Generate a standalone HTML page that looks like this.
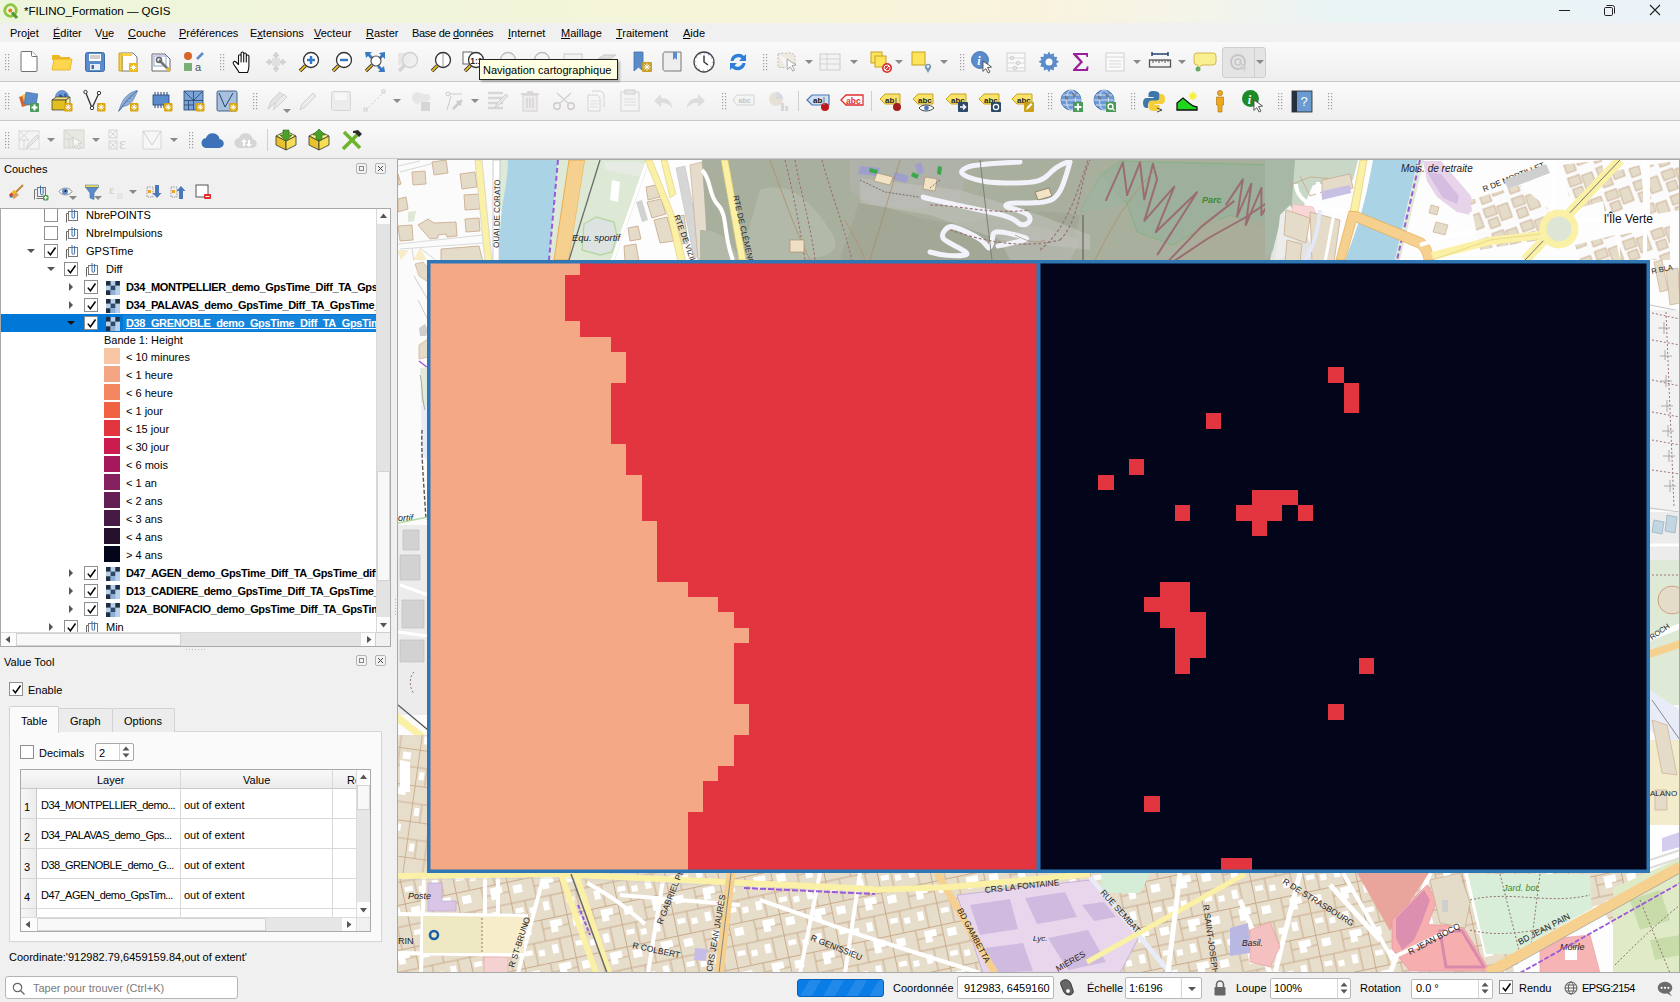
<!DOCTYPE html>
<html><head><meta charset="utf-8"><title>QGIS</title>
<style>
*{margin:0;padding:0;box-sizing:border-box}
html,body{width:1680px;height:1002px;overflow:hidden}
body{position:relative;background:#f0f0f0;font-family:"Liberation Sans",sans-serif;font-size:11px;color:#000}
.a{position:absolute}
.t{position:absolute;white-space:nowrap;line-height:14px}
svg.i{position:absolute;overflow:visible}
.tb{position:absolute;left:0;width:1680px;background:linear-gradient(#fafafa,#efefef);border-bottom:1px solid #c9c9c9}
.grip{position:absolute;width:4px;background-image:radial-gradient(circle,#b9b9b9 0.8px,transparent 1px);background-size:4px 3px}
.dd{position:absolute;width:0;height:0;border-left:4px solid transparent;border-right:4px solid transparent;border-top:4px solid #8a8a8a}
.cb{position:absolute;width:14px;height:14px;border:1px solid #8f8f8f;background:#fff}
.ck{position:absolute;left:2px;top:0px;font-size:12px;line-height:13px;font-weight:bold}
u{text-decoration:underline;text-underline-offset:1px;text-decoration-skip-ink:none}
</style></head><body>
<div class="a" style="left:397px;top:159px;width:1283px;height:814px;background:#a8a8a8"></div>
<svg class="i" style="left:398px;top:160px;overflow:hidden" width="1281" height="812" viewBox="398 160 1281 812">
<defs>
<pattern id="town" width="52" height="44" patternUnits="userSpaceOnUse" patternTransform="rotate(-12)">
 <rect width="52" height="44" fill="#e7ddcb"/>
 <path d="M0 .5h52M.5 0v44M26 0v22M0 22h52M14 22v22M40 22v22M26 10h26" stroke="#c6a686" stroke-width=".9" fill="none"/>
 <rect x="5" y="5" width="9" height="8" fill="#fff"/><rect x="31" y="27" width="6" height="9" fill="#fff"/><rect x="17" y="30" width="6" height="6" fill="#fff"/>
 <path d="M34 3h12v7h-5v5h-7z" fill="#fff"/><rect x="3" y="28" width="8" height="5" fill="#fff"/>
</pattern>
<pattern id="town2" width="40" height="36" patternUnits="userSpaceOnUse" patternTransform="rotate(8)">
 <rect width="40" height="36" fill="#e7ddcb"/>
 <path d="M0 .5h40M.5 0v36M20 0v36M0 18h40M10 18v18" stroke="#c6a686" stroke-width=".8" fill="none"/>
 <rect x="24" y="4" width="8" height="7" fill="#fff"/><rect x="3" y="22" width="5" height="8" fill="#fff"/>
</pattern>
<pattern id="houses" width="44" height="40" patternUnits="userSpaceOnUse" patternTransform="rotate(-6)">
 <rect width="44" height="40" fill="#fff"/>
 <rect x="6" y="6" width="16" height="14" fill="#e5dbc9" stroke="#c6a686" stroke-width=".9"/>
 <rect x="28" y="22" width="11" height="12" fill="#e5dbc9" stroke="#c6a686" stroke-width=".9"/>
</pattern>
<pattern id="dense" width="30" height="26" patternUnits="userSpaceOnUse" patternTransform="rotate(-20)">
 <rect width="30" height="26" fill="#fbfbfb"/>
 <rect x="2" y="2" width="12" height="9" fill="#e5dbc9" stroke="#c6a686" stroke-width=".8"/>
 <rect x="16" y="4" width="11" height="15" fill="#e5dbc9" stroke="#c6a686" stroke-width=".8"/>
 <rect x="3" y="14" width="10" height="9" fill="#e5dbc9" stroke="#c6a686" stroke-width=".8"/>
</pattern>
</defs>
<rect x="398" y="160" width="1282" height="813" fill="#fbfbfb"/>
<path d="M398 166l22-5M400 172l42-11" stroke="#c8c8c8" stroke-width=".7" fill="none"/>
<path d="M432 162l14-2 2 13-14 2zM412 172l13-1 1 13-13 1zM460 174l15-2 2 15-15 2zM398 174l3 10-3 1zM464 195l15-1 1 15-15 1zM398 199l8-2 2 12-10 3zM465 219l14-1 1 13-14 1zM398 226l14-1 1 15-13 1z" fill="#e5dbc9" stroke="#c6a686" stroke-width=".8"/>
<path d="M418 225l10-6 6 4 22-1 1 14-10 1-1-3-8 1v3l-8 1z" fill="#e5dbc9" stroke="#c6a686" stroke-width=".8"/>
<path d="M408 212l8-1-2 10-6 1z" fill="#dfe8d7"/>
<path d="M398 244l85-9M400 249l83-6" stroke="#d0d0d0" stroke-width=".8" fill="none"/>
<path d="M441 249l38-3 4 16h-42z" fill="#e5dbc9" stroke="#c6a686" stroke-width=".8"/>
<path d="M412 262l8-14 8 14zM397 250l12 0-8 10z" fill="#f8edc8"/><path d="M420 248l18 14M414 262l-2-14" stroke="#c8c8c8" stroke-width=".7" fill="none"/>
<path d="M500 160h9l-6 52-3-2z" fill="#dfe9d7"/>
<path d="M475 160h7l10 102h-7z" fill="#faf0a6" stroke="#c9c9c9" stroke-width=".6"/>
<path d="M493 160h7l-1 102h-6z" fill="#fff" stroke="#b0b0b0" stroke-width=".6"/>
<text x="0" y="0" font-size="8" font-family="Liberation Sans" fill="#222" transform="translate(499 248) rotate(-89)">QUAI DE CORATO</text>
<path d="M508 160h50l-9 102h-50c0-20 2-50 4-60s5-30 5-42z" fill="#aad3e6"/>
<path d="M558 160h12l-16 100h-5z" fill="#dfe9d7"/>
<path d="M558 160l-9 100" stroke="#9b5ad8" stroke-width="2" stroke-dasharray="5 3"/>
<path d="M569 160h16l-16 100h-15z" fill="#f6d08f" stroke="#e4a23a" stroke-width=".8"/>
<path d="M585 160h61l-34 100h-43z" fill="#dde8d5"/>
<path d="M600 160l-31 100" stroke="#6a6a6a" stroke-width="1.3"/>
<path d="M604 162h36l10 6-4 10-40-8z" fill="#e6ece3"/><path d="M612 180l8 2-2 20-8-2z" fill="#fff"/>
<path d="M584 224l12-7 18 5 3 14-5 16-12 3-18-5z" fill="#dde3e1" stroke="#b4d8a4" stroke-width="1.3"/>
<path d="M648 160l-36 102" stroke="#fff" stroke-width="3.5"/><path d="M650 160l-36 102" stroke="#c8c8c8" stroke-width=".5"/>
<path d="M614 262l36-102h52l5 102z" fill="#fdfdfd"/>
<path d="M646 187l10-2 4 12-12 3zM647 202l14-3 5 15-14 4zM654 220l13-3 7 24-14 2zM672 218l12-3 4 28-12 2zM628 228l10-2 3 13-11 2zM624 246l12-2 3 18h-14zM690 205l8-2 4 20-8 2z" fill="#e5dbc9" stroke="#c6a686" stroke-width=".8"/>
<path d="M636 202l6-2 6 20-6 2z" fill="#d2d2d2"/>
<text x="572" y="241" font-size="9.5" font-style="italic" font-family="Liberation Sans" fill="#222">Equ. sportif</text>
<path d="M645 160h7l22 54 12 48h-8l-10-46zM661 160h6l9 34-6 4z" fill="#faf0a6" stroke="#d8c46a" stroke-width=".5"/>
<text x="0" y="0" font-size="8" font-family="Liberation Sans" fill="#222" transform="translate(674 216) rotate(70)">RTE DE VIZILLE</text>
<path d="M676 168l9-2 18 90-9 2z" fill="#d6d6d6" stroke="#bdbdbd" stroke-width=".5"/>
<path d="M690 165l12-3 8 98h-12z" fill="#e6dccb" stroke="#c6a686" stroke-width=".6"/>
<path d="M702 160h590v100H708z" fill="#a9af9d"/>
<path d="M760 190c30-10 50 10 70 40s-20 30-60 30h-30zM700 230c20 0 30 10 40 30h-40z" fill="#b3b9a8"/>
<path d="M860 200c40 10 80 30 120 20s60-10 100-5l-10 45H840z" fill="#a2a895"/>
<path d="M702 170c10 10 6 25 16 35s5 30 15 55" stroke="#fff" stroke-width="4" fill="none"/>
<path d="M721 160h7l18 100h-7z" fill="#faf0a6" stroke="#d8c46a" stroke-width=".6"/>
<text x="0" y="0" font-size="8" font-family="Liberation Sans" fill="#222" transform="translate(733 196) rotate(77)">RTE DE CLÉMENCIÈRES</text>
<path d="M795 160c5 30 15 60 20 100M822 160c8 30 20 60 30 100M785 160c10 40 15 70 20 100" stroke="#9a7274" stroke-width="1.1" stroke-dasharray="2.5 2" fill="none"/>
<path d="M770 160c15 40 25 70 40 100M845 220c5 10 15 25 20 40" stroke="#b08d6c" stroke-width=".8" fill="none"/>
<rect x="790" y="240" width="14" height="12" fill="#eee0c6" stroke="#b08d6c" stroke-width=".7"/>
<path d="M850 160h120l-10 40-40 10-50-5-20-15z" fill="#b5b5b0" opacity=".55"/>
<path d="M860 178l100 12 80 25 50 20v15l-90-10-70-25-70-12z" fill="#c2c2bd" opacity=".55"/><path d="M1000 240l30-15 20 5 30 10-10 20h-60z" fill="#c0c0bb" opacity=".5"/>
<path d="M860 166l20 2-2 8-20-2zM895 172l14 4-3 7-14-4zM915 165l6-3 3 10-6 3z" fill="#9f9fcd"/>
<path d="M870 168l8 2-1 4-8-2zM913 172l6 3-2 4-6-3zM938 166l4 1-1 8-4-1z" fill="#3aa84a"/>
<path d="M877 173l16 4-3 8-16-4zM925 177l12 2-2 12-12-2z" fill="#f2e3c5" stroke="#a58a6a" stroke-width=".6"/>
<path d="M860 180l25 12 40 6M930 188l10-8" stroke="#7a6a6a" stroke-width="1" stroke-dasharray="2 1.5" fill="none"/>
<path d="M1020 162c-20 1-45 2-52 5s-10 6 0 10 20 6 45 6 30-3 35-8 10-10 20-13" stroke="#f2f3fa" stroke-width="5" fill="none" stroke-linecap="round" stroke-linejoin="round"/>
<path d="M923 197c10 3 25 6 48 11s40 8 46 14 14 1 13-4-12-8-20-10-4-5 6-5 30 1 37-4 10-12 17-37" stroke="#f2f3fa" stroke-width="5" fill="none" stroke-linecap="round" stroke-linejoin="round"/>
<path d="M930 252c10 3 25 5 35 3s-20-12-22-17 4-13 11-11 20 8 27 13 7 12 10 5 0-12 5-13 25 4 30 6-20 6-28 8" stroke="#f2f3fa" stroke-width="5" fill="none" stroke-linecap="round" stroke-linejoin="round"/>
<path d="M980 160l12 100" stroke="#777" stroke-width=".9"/>
<path d="M930 205c30 0 60 10 100 5M950 230c30 10 70 20 110 10M1060 240c20-20 20-60 30-80M1040 250c25-20 35-50 48-90" stroke="#9a7274" stroke-width="1.2" stroke-dasharray="3 2" fill="none"/>
<path d="M1035 192l14-4 3 8-14 4z" fill="#f2e3c5" stroke="#7a6a5a" stroke-width=".7"/>
<path d="M900 160l-30 100M1015 235c10 5 20 10 30 5" stroke="#a68a6a" stroke-width=".7" fill="none"/>
<path d="M1101 175l19-14 197 5-46 63-41-14-22 10-35 20-36-13-11-31-46 11z" fill="#9cb09c" stroke="#7fb27a" stroke-width=".8"/>
<path d="M1080 212l21-37 24 30z" fill="#a0b3a0"/>
<path d="M1083 215v45" stroke="#555" stroke-width="1"/>
<path d="M1180 260l20-40h80l10 40z" fill="#a9ac98" opacity=".7"/>
<polyline points="1105.7,200.9 1122.9,162.3 1127.1,195.1 1140.0,162.3 1144.3,199.4 1152.9,163.7 1157.1,179.4 1144.3,220.9 1174.3,186.6 1155.7,232.3 1197.1,192.3 1157.1,255.1" stroke="#9a6d72" stroke-width="2" fill="none" stroke-linejoin="round"/>
<polyline points="1225.7,205.1 1242.9,179.4 1237.1,216.6 1251.4,183.7 1245.7,225.1 1261.4,188.0 1261.4,215.1 1280.0,185.1 1277.1,220.9 1290.0,189.4" stroke="#9a6d72" stroke-width="2" fill="none" stroke-linejoin="round"/>
<polyline points="1168.6,260.9 1201.4,226.6 1234.3,200.9" stroke="#9a6d72" stroke-width="2" fill="none" stroke-linejoin="round"/>
<polyline points="1174.3,260.9 1208.6,238.0 1244.3,218.0 1291.4,186.6" stroke="#9a6d72" stroke-width="2" fill="none" stroke-linejoin="round"/>
<text x="1202" y="203" font-size="9" font-style="italic" font-weight="bold" font-family="Liberation Sans" fill="#3f8a2f">Parc</text>
<path d="M1095 260c10-20 30-60 60-90" stroke="#b08d6c" stroke-width=".8" fill="none"/>
<path d="M1290 160h390v100h-390z" fill="#fdfdfd"/>
<path d="M1285 160h73l-5 20-40 5-20 45-8 30h-15z" fill="#c9d8c6"/>
<path d="M1265 160h30l-5 70-25 30z" fill="#a7b9a6"/>
<path d="M1270 262l10-40 15-10 25 50z" fill="#e4e5e2"/><path d="M1280 215l10-10 10 15-5 30-20 12z" fill="#ececea"/>
<path d="M1290 185l20-8 25 2M1300 176l10 20 15-5" stroke="#c6a686" stroke-width=".8" fill="none"/>
<path d="M1296 184c0 10 8 20 24 24l32 4M1318 182v26" stroke="#fff" stroke-width="4" fill="none"/>
<path d="M1322 180l28-6 3 14-31 8z" fill="#e5dbc9" stroke="#c6a686" stroke-width=".7"/><path d="M1322 191l28-6 1 8-29 7z" fill="#c8c0e2"/>
<path d="M1293 204l20 3 5 12-12 4-14-8z" fill="#f8d6d6" stroke="#f0b0b0" stroke-width=".6"/><path d="M1302 220l5-2-3 10-4 1z" fill="#b7b0e0"/>
<path d="M1286 210l24 8-4 25-22-8zM1310 212l30 8-6 42h-22zM1287 240l15 4-2 18h-15z" fill="#e5dbc9" stroke="#c6a686" stroke-width=".7"/>
<path d="M1320 210c-2 20-5 35-16 52" stroke="#e4e8f8" stroke-width="3.5" fill="none"/>
<path d="M1335 208l-10 54" stroke="#fff" stroke-width="3"/>
<path d="M1373 160h45l-23 100h-50c12-30 20-55 28-100z" fill="#aad3e6"/>
<path d="M1418 160h6l-24 100h-5z" fill="#dfe9d7"/><path d="M1420 160l-23 100" stroke="#9b5ad8" stroke-width="2" stroke-dasharray="5 3"/>
<path d="M1360 160h7l-9 52h-8z" fill="#faf0a6" stroke="#d8c46a" stroke-width=".6"/>
<path d="M1349 211l9 1 64 26c8 4 10 12 12 22h-10c-1-6-4-12-8-13l-60-25-11 38h-9z" fill="#f6d08f" stroke="#e4a23a" stroke-width=".6"/>
<path d="M1423 161h18l30 35 4 20-18-4-20-15-10-16z" fill="#e7d3ea"/><path d="M1427 172l14 2 18 22-2 8-14-6z" fill="#d4bde1"/>
<text x="1401" y="172" font-size="10" font-style="italic" font-family="Liberation Sans" fill="#222">Mois. de retraite</text>
<path d="M1420 245l30-10 40-5M1428 215l12-15M1470 215l90-60" stroke="#fff" stroke-width="4" fill="none"/>
<path d="M1431 205l8 2-2 8-8-2zM1436 222l12 3-3 10-12-3z" fill="#e5dbc9" stroke="#c6a686" stroke-width=".6"/>
<text x="0" y="0" font-size="8" font-family="Liberation Sans" fill="#222" transform="translate(1484 192) rotate(-22)">R DE MORTILLET</text>
<path d="M1504 180l42-16 4 9-42 16z" fill="#cfcfcf"/>
<path d="M1470 200l50-15 30 25-10 30-60 10zM1562 165l40-5 5 40-35 10zM1600 175l40-10 5 40-40 10zM1575 245l40-10 5 25h-40zM1620 235l50-10v35h-50zM1650 165l30-5v50l-30 5z" fill="url(#dense)"/>
<path d="M1432 256l58-15 50-6" stroke="#faf0a6" stroke-width="8" fill="none"/><path d="M1432 260l58-20 50-6" stroke="#d8c46a" stroke-width=".5" fill="none"/>
<path d="M1525 260l95-100" stroke="#faf0a6" stroke-width="10"/><path d="M1525 260l95-100" stroke="#666" stroke-width=".9"/>
<path d="M1553 160v52M1645 160v100M1577 222l70-8" stroke="#fff" stroke-width="4"/>
<circle cx="1559" cy="229" r="16" fill="#dde6d5" stroke="#faf0a6" stroke-width="7"/>
<text x="1604" y="223" font-size="12" font-family="Liberation Sans" fill="#111">l'Île Verte</text>
<rect x="398" y="260" width="30" height="270" fill="#fbfbfb"/>
<path d="M415 264l8-2 5 6v14l-9-6z" fill="#e5dbc9" stroke="#c6a686" stroke-width=".6"/>
<path d="M414 276l14 24M418 300l10 20" stroke="#c8c8c8" stroke-width=".9"/>
<path d="M419 328l6-4 3 6-2 6h-6z" fill="#cfcfcf"/><path d="M419 345l9-6v18l-9 2z" fill="#e5dbc9" stroke="#c6a686" stroke-width=".6"/>
<path d="M419 361l9 7" stroke="#9b5ad8" stroke-width="1.5"/>
<path d="M420 368l8-1v45l-7-10z" fill="#e3e8dc"/><path d="M421 405l7 2v55l-6-8z" fill="#e8ebfa"/>
<path d="M420 375c3 10 1 20 5 35" stroke="#999" stroke-width=".8" fill="none"/>
<path d="M422 430c-1 25 2 55 4 90" stroke="#555" stroke-width="1.4" stroke-dasharray="4 2" fill="none"/>
<text x="398" y="521" font-size="9" font-style="italic" font-family="Liberation Sans" fill="#222">ortif</text>
<path d="M398 523l30-6" stroke="#b4d8a4" stroke-width="1.3"/>
<rect x="398" y="525" width="30" height="190" fill="#ececec"/>
<path d="M403 530h16v20h-16zM400 555h20v25h-20zM402 600h22v28h-22zM400 640h24v22h-24z" fill="#d2d2d2" stroke="#bdbdbd" stroke-width=".6"/>
<path d="M400 585l28 10M398 632l30 4" stroke="#fff" stroke-width="3"/>
<path d="M414 672c-5 5-5 15 0 22" stroke="#9a7274" stroke-width="1" stroke-dasharray="2 2" fill="none"/>
<path d="M398 705l30 25" stroke="#555" stroke-width="1.3"/><path d="M398 713l30 24v8l-30-22z" fill="#faf0a6"/>
<rect x="398" y="735" width="30" height="140" fill="url(#town2)"/>
<path d="M400 760l10 2v30h-10z" fill="#fff"/>
<rect x="1650" y="260" width="30" height="50" fill="#fdfdfd"/>
<path d="M1654 262l8-2 6 30-8 2zM1666 270l12-2 2 35-10 2z" fill="#e5dbc9" stroke="#c6a686" stroke-width=".6"/>
<text x="0" y="0" font-size="7.5" font-family="Liberation Sans" fill="#222" transform="translate(1652 274) rotate(-12)">R BLA</text>
<path d="M1650 305l30 6" stroke="#c4c4c4" stroke-width="1"/>
<rect x="1650" y="310" width="30" height="200" fill="#f2f2f2"/>
<path d="M1652 313l28 6M1652 340l28 5M1652 380l28 6M1652 412l28 5M1652 440l28 5M1652 470l28 4M1666 312l8 195" stroke="#a07474" stroke-width="1" stroke-dasharray="2 2" fill="none"/>
<path d="M1664 322v12M1658 328h12M1665 350v10M1660 356h12M1666 375v12M1660 381h12M1667 400v12M1661 406h12M1668 425v12M1662 431h12M1669 450v12M1663 456h12M1670 480v12M1664 486h12" stroke="#9a9a9a" stroke-width=".8"/>
<path d="M1650 508l30 4" stroke="#c4c4c4"/>
<rect x="1650" y="512" width="30" height="48" fill="#ececec"/><path d="M1654 520l10 2-2 12-10-2zM1667 515l10 2-2 16-10-2z" fill="#c2d6e2" stroke="#8aa4b4" stroke-width=".6"/>
<path d="M1650 545h30" stroke="#fff" stroke-width="3"/>
<rect x="1650" y="560" width="30" height="145" fill="#dfead6"/>
<circle cx="1672" cy="600" r="14" fill="#e5dbc9" stroke="#c6a686"/><path d="M1652 575h26" stroke="#a07474" stroke-dasharray="2 2"/>
<path d="M1650 635l30-12v6l-30 12z" fill="#fff"/><path d="M1650 650l30-10v8l-30 10z" fill="#f6d08f"/>
<text x="0" y="0" font-size="7.5" font-family="Liberation Sans" fill="#222" transform="translate(1652 640) rotate(-35)">ROCH</text>
<path d="M1650 690l30 20v50l-30-30z" fill="#e8ebf8"/><path d="M1652 700l28 40" stroke="#8a8a8a" stroke-width="1"/>
<path d="M1650 740h30v85h-30z" fill="#f3eccc"/><path d="M1652 720l15 5 10 50-15-2zM1655 790h12v20h-12z" fill="#e5dbc9" stroke="#c6a686" stroke-width=".6"/>
<text x="1650" y="796" font-size="8" font-family="Liberation Sans" fill="#222">ALANO</text>
<path d="M1650 825h30v48h-30z" fill="#fff"/><path d="M1662 838l18-6v15l-18 5z" fill="#d4cdee"/><path d="M1650 860l30-10M1650 868l30-10" stroke="#ddd" stroke-width="2"/>
<rect x="398" y="873" width="1282" height="100" fill="url(#town)"/>
<path d="M424 878l-3 95M485 878v37M498 878v37M543 878l-25 95M398 914l130 2M398 953l125 2M587 883c20 10 40 25 58 41M663 880l-15 93M760 900l100 35 120 38M820 873l-20 100M860 873l-15 100M620 895l120 10" stroke-width="4" stroke="#fff" fill="none"/>
<path d="M398 876l160-2 165 8 150 7" stroke="#faf0a6" stroke-width="6" fill="none"/><path d="M398 880l160-2 165 8 150 7" stroke="#cfcfcf" stroke-width=".6" fill="none"/>
<path d="M561 874l35 99M576 874l33 99" stroke="#faf0a6" stroke-width="6"/><path d="M571 874l36 99" stroke="#6a6a6a" stroke-width="1.5"/><path d="M578 905l12 30" stroke="#9b5ad8" stroke-width="2" stroke-dasharray="4 2"/>
<path d="M731 873l-12 100" stroke="#f6d08f" stroke-width="9"/><path d="M731 873l-12 100" stroke="#8a8a8a" stroke-width="1"/>
<path d="M744 888l131 6" stroke="#9b5ad8" stroke-width="2" stroke-dasharray="6 2"/>
<path d="M428 883h14v18h14v10h-28z" fill="#d9c6e6" stroke="#b9a2cf" stroke-width=".6"/>
<path d="M423 916l101 1v36H423z" fill="#efe9c3"/><path d="M482 917h42v36h-42z" fill="#f7edcb"/><path d="M482 918v35" stroke="#8f7474" stroke-dasharray="2 2"/>
<circle cx="434" cy="935" r="4" fill="none" stroke="#1c5fa8" stroke-width="2.6"/>
<path d="M484 957h24v16h-24z" fill="#f5d2d2" stroke="#e6a0a0" stroke-width=".6"/>
<path d="M695 948l12 1-1 12-12-1z" fill="#c5bde6"/>
<text x="408" y="899" font-size="9" font-style="italic" font-family="Liberation Sans" fill="#222">Poste</text>
<text x="398" y="944" font-size="9" font-family="Liberation Sans" fill="#222">RIN</text>
<text x="0" y="0" font-size="8.5" font-family="Liberation Sans" fill="#222" transform="translate(514 968) rotate(-72)">R ST-BRUNO</text>
<text x="0" y="0" font-size="8.5" font-family="Liberation Sans" fill="#222" transform="translate(662 925) rotate(-68)">R GABRIEL PÉRI</text>
<text x="0" y="0" font-size="8.5" font-family="Liberation Sans" fill="#222" transform="translate(632 948) rotate(12)">R COLBERT</text>
<text x="0" y="0" font-size="8.5" font-family="Liberation Sans" fill="#222" transform="translate(712 972) rotate(-80)">CRS JEAN JAURÈS</text>
<text x="0" y="0" font-size="8.5" font-family="Liberation Sans" fill="#222" transform="translate(810 940) rotate(22)">R GENISSIEU</text>
<path d="M872 893l80 2 138-15 50 55-20 38H982z" fill="url(#town)" opacity="0"/>
<path d="M957 895l133-15 50 55-20 38H983z" fill="#e7d6ec" stroke="#c9b1da" stroke-width="1"/>
<path d="M970 905l40-6 8 30-38 6zM1025 898l40-6 12 25-40 7zM985 948l38-5 10 28-40 2zM1048 938l40-8 18 32-38 8zM1082 905l22-3 12 15-22 4z" fill="#d0bbe0"/>
<text x="1033" y="941" font-size="8" font-style="italic" font-family="Liberation Sans" fill="#222">Lyc.</text>
<path d="M937 873l58 100" stroke="#f6d08f" stroke-width="7"/>
<path d="M870 890l80-3 140-13" stroke="#faf0a6" stroke-width="6" fill="none"/>
<text x="0" y="0" font-size="8.5" font-family="Liberation Sans" fill="#222" transform="translate(985 893) rotate(-6)">CRS LA FONTAINE</text>
<text x="0" y="0" font-size="8.5" font-family="Liberation Sans" fill="#222" transform="translate(957 910) rotate(62)">BD GAMBETTA</text>
<path d="M1090 877l80 96" stroke="#e8ecf8" stroke-width="5"/>
<path d="M1102 873h48l-10 20h-38z" fill="#d5ecd7"/>
<path d="M1087 962l158-88" stroke="#faf0a6" stroke-width="5"/>
<text x="0" y="0" font-size="8.5" font-family="Liberation Sans" fill="#222" transform="translate(1100 893) rotate(48)">RUE SEMBAT</text>
<text x="0" y="0" font-size="8.5" font-family="Liberation Sans" fill="#222" transform="translate(1058 972) rotate(-30)">MIÈRES</text>
<path d="M1180 873l-12 100M1240 900l30 73M1300 873l-25 100M1330 885l50 55M1430 873l-40 100" stroke="#fff" stroke-width="5"/>
<text x="0" y="0" font-size="8.5" font-family="Liberation Sans" fill="#222" transform="translate(1203 905) rotate(82)">R SAINT-JOSEPH</text>
<path d="M1230 928l18-5 2 30-20 3z" fill="#b9b8e2"/><path d="M1250 930l20-8 10 25-10 20-20-5z" fill="#f5c0c0" stroke="#e39a9a" stroke-width=".6"/>
<text x="1242" y="946" font-size="8.5" font-style="italic" font-family="Liberation Sans" fill="#222">Basil.</text>
<path d="M1343 873l51 89" stroke="#fff" stroke-width="4"/>
<path d="M1357 873h72l-12 18-27 40z" fill="#e9a59b"/>
<path d="M1392 920l35-35 10 15-9 25h34l28 46h-80l-18-22z" fill="#f7aeae" stroke="#e48fa0" stroke-width=".6"/>
<path d="M1396 918l28-28 6 10-8 22-8 18-12 10-6-12z" fill="#dc8fae"/><path d="M1440 931h22l22 36h-38z" fill="none" stroke="#d98aab" stroke-width="3"/>
<path d="M1430 880l30-7 10 30-5 25-25-5z" fill="#e5dbc9" stroke="#c6a686" stroke-width=".6"/><rect x="1442" y="900" width="6" height="12" fill="#cfcfcf"/>
<path d="M1394 957l66-32M1466 873l20 80" stroke="#fff" stroke-width="4"/>
<text x="0" y="0" font-size="8.5" font-family="Liberation Sans" fill="#222" transform="translate(1282 883) rotate(32)">R DE STRASBOURG</text>
<text x="0" y="0" font-size="8.5" font-family="Liberation Sans" fill="#222" transform="translate(1410 955) rotate(-28)">R JEAN BOCQ</text>
<path d="M1468 874h122l2 40-20 30-20 10h-66z" fill="#d9eed9"/>
<path d="M1470 900c40-10 80 5 120-5M1500 874l20 80M1540 874l-10 80M1470 930c40 10 70-5 100 0" stroke="#8f7070" stroke-width="1" stroke-dasharray="2 2" fill="none"/>
<text x="1503" y="891" font-size="9" font-style="italic" font-family="Liberation Sans" fill="#3f8a2f">Jard. bot.</text>
<path d="M1518 950l80-45 15 20v48h-95z" fill="#fdfdfd"/>
<path d="M1540 940l50-5 10 38h-60z" fill="#f6b4b4" stroke="#e49a9a" stroke-width=".6"/><rect x="1565" y="948" width="12" height="12" fill="#fff"/>
<text x="1560" y="950" font-size="9" font-style="italic" font-family="Liberation Sans" fill="#222">Moirle</text>
<path d="M1613 888l67-30v115h-67z" fill="#dfeac6"/><path d="M1630 900l30-10 10 30-30 10zM1650 940l30-5v20l-25 5z" fill="#c8dcaa"/><path d="M1615 965c20-20 40-40 65-60M1640 900l30 73" stroke="#8f7070" stroke-dasharray="2 2" fill="none"/>
<path d="M1488 973l192-106" stroke="#f6d08f" stroke-width="11"/><path d="M1500 973l180-100" stroke="#9a9a9a" stroke-width=".7"/>
<path d="M1520 973l160-90" stroke="#9b5ad8" stroke-width="1.8" stroke-dasharray="5 2"/>
<text x="0" y="0" font-size="8.5" font-family="Liberation Sans" fill="#222" transform="translate(1520 945) rotate(-28)">BD JEAN PAIN</text>
<rect x="427" y="260" width="613" height="613" fill="#e3353f"/>
<path d="M427 260 L580 260 L580 275 L565 275 L565 291 L565 291 L565 306 L565 306 L565 321 L580 321 L580 337 L611 337 L611 352 L626 352 L626 367 L626 367 L626 383 L611 383 L611 398 L611 398 L611 413 L611 413 L611 429 L611 429 L611 444 L626 444 L626 459 L626 459 L626 475 L642 475 L642 490 L642 490 L642 505 L642 505 L642 521 L657 521 L657 536 L657 536 L657 551 L657 551 L657 566 L657 566 L657 582 L688 582 L688 597 L718 597 L718 612 L734 612 L734 628 L749 628 L749 643 L734 643 L734 658 L734 658 L734 674 L734 674 L734 689 L734 689 L734 704 L749 704 L749 720 L749 720 L749 735 L734 735 L734 750 L734 750 L734 766 L718 766 L718 781 L703 781 L703 796 L703 796 L703 812 L688 812 L688 827 L688 827 L688 842 L688 842 L688 858 L688 858 L688 873 L427 873 Z" fill="#f4a886" shape-rendering="crispEdges"/>
<rect x="1037" y="260" width="613" height="613" fill="#03051a"/>
<path d="M1328 367H1344V383H1328ZM1344 383H1359V398H1344ZM1344 398H1359V413H1344ZM1206 413H1221V429H1206ZM1129 459H1144V475H1129ZM1098 475H1114V490H1098ZM1175 505H1190V521H1175ZM1252 490H1267V505H1252ZM1267 490H1282V505H1267ZM1282 490H1298V505H1282ZM1236 505H1252V521H1236ZM1252 505H1267V521H1252ZM1267 505H1282V521H1267ZM1298 505H1313V521H1298ZM1252 521H1267V536H1252ZM1160 582H1175V597H1160ZM1175 582H1190V597H1175ZM1144 597H1160V612H1144ZM1160 597H1175V612H1160ZM1175 597H1190V612H1175ZM1160 612H1175V628H1160ZM1175 612H1190V628H1175ZM1190 612H1206V628H1190ZM1175 628H1190V643H1175ZM1190 628H1206V643H1190ZM1175 643H1190V658H1175ZM1190 643H1206V658H1190ZM1175 658H1190V674H1175ZM1359 658H1374V674H1359ZM1328 704H1344V720H1328ZM1144 796H1160V812H1144ZM1221 858H1236V873H1221ZM1236 858H1252V873H1236Z" fill="#e3353f" shape-rendering="crispEdges"/>
<rect x="428.75" y="261.75" width="609.5" height="609.5" fill="none" stroke="#2f76b5" stroke-width="3.5"/>
<rect x="1038.75" y="261.75" width="609.5" height="609.5" fill="none" stroke="#2f76b5" stroke-width="3.5"/>
</svg>

<div class="a" style="left:0;top:0;width:1680px;height:23px;background:linear-gradient(90deg,#edf5dc 0%,#f1f5d9 25%,#f7f4d9 50%,#f9f3de 62%,#f3f4ea 72%,#eaf3f4 79%,#ebf3f8 100%)"></div>
<svg class="i" style="left:3px;top:3px" width="16" height="17" viewBox="0 0 16 17"><circle cx="7.5" cy="7.5" r="5.8" fill="none" stroke="#8ec63f" stroke-width="2.8"/><circle cx="7.3" cy="7.6" r="2" fill="#ee7913"/><path d="M9 9.5l5 5.5" stroke="#589632" stroke-width="3"/></svg>
<div class="t" style="left:24px;top:4px;font-size:11.5px">*FILINO_Formation — QGIS</div>
<svg class="i" style="left:1556px;top:4px" width="20" height="12" viewBox="0 0 20 12"><path d="M3 6.5h11" stroke="#222" stroke-width="1"/></svg>
<svg class="i" style="left:1602px;top:3px" width="14" height="14" viewBox="0 0 14 14"><rect x="2.5" y="4.5" width="8" height="8" rx="1.2" fill="none" stroke="#222"/><path d="M4.5 2.5h6a2 2 0 0 1 2 2v6" fill="none" stroke="#222"/></svg>
<svg class="i" style="left:1648px;top:3px" width="14" height="14" viewBox="0 0 14 14"><path d="M2 2l10 10M12 2L2 12" stroke="#222" stroke-width="1.1"/></svg>
<div class="a" style="left:0;top:23px;width:1680px;height:19px;background:#f0f0f0"></div>
<div class="t" style="left:10px;top:26px;font-size:11px">Pro<u>j</u>et</div>
<div class="t" style="left:53px;top:26px;font-size:11px"><u>É</u>diter</div>
<div class="t" style="left:95px;top:26px;font-size:11px">V<u>u</u>e</div>
<div class="t" style="left:128px;top:26px;font-size:11px"><u>C</u>ouche</div>
<div class="t" style="left:179px;top:26px;font-size:11px"><u>P</u>références</div>
<div class="t" style="left:250px;top:26px;font-size:11px">E<u>x</u>tensions</div>
<div class="t" style="left:314px;top:26px;font-size:11px"><u>V</u>ecteur</div>
<div class="t" style="left:366px;top:26px;font-size:11px"><u>R</u>aster</div>
<div class="t" style="left:412px;top:26px;font-size:11px"><span style="letter-spacing:-0.3px">Base de <u>d</u>onnées</span></div>
<div class="t" style="left:508px;top:26px;font-size:11px"><u>I</u>nternet</div>
<div class="t" style="left:561px;top:26px;font-size:11px"><u>M</u>aillage</div>
<div class="t" style="left:616px;top:26px;font-size:11px"><u>T</u>raitement</div>
<div class="t" style="left:683px;top:26px;font-size:11px"><u>A</u>ide</div>
<div class="tb" style="top:42px;height:40px"></div>
<div class="tb" style="top:82px;height:39px"></div>
<div class="tb" style="top:121px;height:38px"></div>
<svg class="i" style="left:5px;top:54px" width="5" height="17" viewBox="0 0 5 17"><rect x="0" y="0" width="1.2" height="1.2" fill="#9c9c9c"/><rect x="3" y="0" width="1.2" height="1.2" fill="#9c9c9c"/><rect x="0" y="3" width="1.2" height="1.2" fill="#9c9c9c"/><rect x="3" y="3" width="1.2" height="1.2" fill="#9c9c9c"/><rect x="0" y="6" width="1.2" height="1.2" fill="#9c9c9c"/><rect x="3" y="6" width="1.2" height="1.2" fill="#9c9c9c"/><rect x="0" y="9" width="1.2" height="1.2" fill="#9c9c9c"/><rect x="3" y="9" width="1.2" height="1.2" fill="#9c9c9c"/><rect x="0" y="12" width="1.2" height="1.2" fill="#9c9c9c"/><rect x="3" y="12" width="1.2" height="1.2" fill="#9c9c9c"/><rect x="0" y="15" width="1.2" height="1.2" fill="#9c9c9c"/><rect x="3" y="15" width="1.2" height="1.2" fill="#9c9c9c"/></svg>
<svg class="i" style="left:16px;top:50px" width="24" height="24" viewBox="0 0 24 24"><path d="M6 1.5h10l5 5v14a1 1 0 0 1-1 1H6a1 1 0 0 1-1-1v-18a1 1 0 0 1 1-1z" fill="#fff" stroke="#707070" stroke-width="1"/><path d="M15.5 1.5v4a1 1 0 0 0 1 1h4.5" fill="#fff" stroke="#707070"/></svg>
<svg class="i" style="left:50px;top:50px" width="24" height="24" viewBox="0 0 24 24"><path d="M2 5h7l2 2h9v3H2z" fill="#e8b923"/><path d="M2 20l2-11h18l-2 11z" fill="#fdd64e" stroke="#e0b020" stroke-width=".8"/></svg>
<svg class="i" style="left:83px;top:50px" width="24" height="24" viewBox="0 0 24 24"><rect x="2.5" y="2.5" width="19" height="19" rx="2" fill="#5a8ccc" stroke="#3d6ea8"/><rect x="6" y="4" width="12" height="7" fill="#fff"/><path d="M7 6h10M7 8h10" stroke="#888" stroke-width=".8"/><rect x="7" y="14" width="10" height="6" fill="#e8eef6"/><rect x="8.5" y="15" width="2.5" height="4" fill="#3d6ea8"/></svg>
<svg class="i" style="left:116px;top:50px" width="24" height="24" viewBox="0 0 24 24"><path d="M6 3h11l4 4v14H6z" fill="#fff" stroke="#777"/><path d="M3 3h3v18H3z" fill="#f7d246" stroke="#c9a21a"/><path d="M6 3h10v3H6z" fill="#f7d246"/><rect x="13" y="13" width="9" height="9" fill="#e8b923"/><path d="M17.5 14.5v6M14.5 17.5h6M15.5 15.5l4 4M19.5 15.5l-4 4" stroke="#fff" stroke-width="1"/></svg>
<svg class="i" style="left:149px;top:50px" width="24" height="24" viewBox="0 0 24 24"><path d="M3 4h13l5 5v12H3z" fill="#fff" stroke="#666"/><rect x="5" y="6" width="12" height="10" fill="none" stroke="#8aa6d6"/><path d="M10 10l9 9" stroke="#777" stroke-width="2.5"/><path d="M18 18l3 3" stroke="#e8b923" stroke-width="2.5"/><circle cx="10" cy="10" r="2.5" fill="none" stroke="#666" stroke-width="1.5"/></svg>
<svg class="i" style="left:182px;top:50px" width="24" height="24" viewBox="0 0 24 24"><circle cx="6" cy="6" r="4" fill="#d9652b"/><path d="M15 9l6-6" stroke="#5a8ccc" stroke-width="2.5"/><rect x="2" y="13" width="8" height="8" fill="#7ab077"/><text x="13" y="21" font-size="11" fill="#555" font-family="Liberation Sans">a</text></svg>
<svg class="i" style="left:220px;top:54px" width="5" height="17" viewBox="0 0 5 17"><rect x="0" y="0" width="1.2" height="1.2" fill="#9c9c9c"/><rect x="3" y="0" width="1.2" height="1.2" fill="#9c9c9c"/><rect x="0" y="3" width="1.2" height="1.2" fill="#9c9c9c"/><rect x="3" y="3" width="1.2" height="1.2" fill="#9c9c9c"/><rect x="0" y="6" width="1.2" height="1.2" fill="#9c9c9c"/><rect x="3" y="6" width="1.2" height="1.2" fill="#9c9c9c"/><rect x="0" y="9" width="1.2" height="1.2" fill="#9c9c9c"/><rect x="3" y="9" width="1.2" height="1.2" fill="#9c9c9c"/><rect x="0" y="12" width="1.2" height="1.2" fill="#9c9c9c"/><rect x="3" y="12" width="1.2" height="1.2" fill="#9c9c9c"/><rect x="0" y="15" width="1.2" height="1.2" fill="#9c9c9c"/><rect x="3" y="15" width="1.2" height="1.2" fill="#9c9c9c"/></svg>
<svg class="i" style="left:231px;top:50px" width="24" height="24" viewBox="0 0 24 24"><path d="M8 22.5C7 20 4 16.5 2.5 14 1.5 12.5 3 10.5 5 12l2.5 2.5V6c0-1.7 2.6-1.7 2.6 0v6V3.3c0-1.7 2.6-1.7 2.6 0V12V4.3c0-1.7 2.6-1.7 2.6 0V12V6.3c0-1.7 2.6-1.7 2.6 0V16c0 3-.9 5-1.4 6.5z" fill="#fff" stroke="#111" stroke-width="1.1" stroke-linejoin="round"/></svg>
<svg class="i" style="left:264px;top:50px" width="24" height="24" viewBox="0 0 24 24"><path d="M12 2l3 4h-2v4h-2V6H9zM12 22l3-4h-2v-4h-2v4H9zM2 12l4-3v2h4v2H6v2zM22 12l-4-3v2h-4v2h4v2z" fill="#d4d4d4" stroke="#c4c4c4" stroke-width=".5"/><rect x="8" y="8" width="8" height="8" fill="#e0e0e0"/></svg>
<svg class="i" style="left:297px;top:50px" width="24" height="24" viewBox="0 0 24 24"><circle cx="14" cy="10" r="7.5" fill="#fff" stroke="#333" stroke-width="1.3"/><path d="M14 6v8M10 10h8" stroke="#3a78c2" stroke-width="2.5"/><path d="M8.5 15.5L3 21" stroke="#333" stroke-width="3.5"/><path d="M8.3 15.7L3.2 20.8" stroke="#f2c21b" stroke-width="1.8"/></svg>
<svg class="i" style="left:330px;top:50px" width="24" height="24" viewBox="0 0 24 24"><circle cx="14" cy="10" r="7.5" fill="#fff" stroke="#333" stroke-width="1.3"/><path d="M10 10h8" stroke="#3a78c2" stroke-width="2.5"/><path d="M8.5 15.5L3 21" stroke="#333" stroke-width="3.5"/><path d="M8.3 15.7L3.2 20.8" stroke="#f2c21b" stroke-width="1.8"/></svg>
<svg class="i" style="left:363px;top:50px" width="24" height="24" viewBox="0 0 24 24"><path d="M2 2h7l-2 2 3 3-2 2-3-3-2 2zM22 2v7l-2-2-3 3-2-2 3-3-2-2zM22 22h-7l2-2-3-3 2-2 3 3 2-2z" fill="#3a78c2"/><circle cx="13" cy="11" r="5" fill="#fff" stroke="#555" stroke-width="1.2"/><path d="M9 15L3 21" stroke="#333" stroke-width="3.2"/><path d="M8.8 15.2L3.2 20.8" stroke="#f2c21b" stroke-width="1.6"/></svg>
<svg class="i" style="left:396px;top:50px" width="24" height="24" viewBox="0 0 24 24"><rect x="2" y="3" width="12" height="12" fill="#e6e6e6"/><circle cx="14" cy="10" r="7.5" fill="#eee" fill-opacity=".8" stroke="#cfcfcf" stroke-width="1.3"/><path d="M8.5 15.5L3 21" stroke="#d5d5d5" stroke-width="3.5"/></svg>
<svg class="i" style="left:429px;top:50px" width="24" height="24" viewBox="0 0 24 24"><circle cx="14" cy="10" r="7.5" fill="#fff" stroke="#333" stroke-width="1.3"/><path d="M14 3v14" stroke="#999" stroke-width="1"/><path d="M8.5 15.5L3 21" stroke="#333" stroke-width="3.5"/><path d="M8.3 15.7L3.2 20.8" stroke="#f2c21b" stroke-width="1.8"/></svg>
<svg class="i" style="left:462px;top:50px" width="24" height="24" viewBox="0 0 24 24"><rect x="1" y="2" width="9" height="12" fill="#fff" stroke="#666"/><circle cx="14" cy="10" r="7.5" fill="#fff" stroke="#333" stroke-width="1.3"/><text x="8.3" y="13.5" font-size="8.5" font-weight="bold" fill="#222" font-family="Liberation Sans">1:1</text><path d="M8.5 15.5L3 21" stroke="#333" stroke-width="3.5"/><path d="M8.3 15.7L3.2 20.8" stroke="#f2c21b" stroke-width="1.8"/></svg>
<svg class="i" style="left:496px;top:50px" width="24" height="24" viewBox="0 0 24 24"><circle cx="12" cy="10" r="7.5" fill="#f4f4f4" stroke="#bdbdbd" stroke-width="1.3"/></svg>
<svg class="i" style="left:530px;top:50px" width="24" height="24" viewBox="0 0 24 24"><circle cx="12" cy="10" r="7.5" fill="#f4f4f4" stroke="#bdbdbd" stroke-width="1.3"/></svg>
<svg class="i" style="left:561px;top:50px" width="24" height="24" viewBox="0 0 24 24"><rect x="3" y="4" width="18" height="15" fill="#f2f2f2" stroke="#c9c9c9"/></svg>
<svg class="i" style="left:595px;top:50px" width="24" height="24" viewBox="0 0 24 24"><path d="M3 9l6-4h12l-6 4z" fill="#e0e0e0" stroke="#c9c9c9"/><path d="M3 9h12v10H3z" fill="#eee" stroke="#c9c9c9"/></svg>
<svg class="i" style="left:630px;top:50px" width="24" height="24" viewBox="0 0 24 24"><path d="M4 2h9v19l-4.5-4L4 21z" fill="#5a8ccc" stroke="#3d6ea8" stroke-width=".8"/><rect x="12" y="12" width="10" height="10" rx="1" fill="#c8a12a"/><path d="M17 13.5v7M13.5 17h7M14.5 14.5l5 5M19.5 14.5l-5 5" stroke="#fff" stroke-width="1"/></svg>
<svg class="i" style="left:660px;top:50px" width="24" height="24" viewBox="0 0 24 24"><path d="M3 4c0-1 1-2 2-2h16v19H5c-1 0-2-1-2-2z" fill="#eee" stroke="#777"/><path d="M13 2h4v8l-2-2-2 2z" fill="#5a8ccc"/></svg>
<svg class="i" style="left:692px;top:50px" width="24" height="24" viewBox="0 0 24 24"><circle cx="12" cy="12" r="10" fill="#fff" stroke="#444" stroke-width="1.3"/><circle cx="12" cy="12" r="8.3" fill="none" stroke="#4a78b8" stroke-width=".8" stroke-dasharray="1 3.3"/><path d="M12 5.5V12l4 3" stroke="#333" stroke-width="1.4" fill="none"/></svg>
<svg class="i" style="left:726px;top:50px" width="24" height="24" viewBox="0 0 24 24"><path d="M4.5 11A8 8 0 0 1 18 6l2-2v7h-7l2.5-2.5A5 5 0 0 0 7.5 11z" fill="#2e7fd9"/><path d="M19.5 13A8 8 0 0 1 6 18l-2 2v-7h7l-2.5 2.5A5 5 0 0 0 16.5 13z" fill="#2e7fd9"/></svg>
<svg class="i" style="left:763px;top:54px" width="5" height="17" viewBox="0 0 5 17"><rect x="0" y="0" width="1.2" height="1.2" fill="#9c9c9c"/><rect x="3" y="0" width="1.2" height="1.2" fill="#9c9c9c"/><rect x="0" y="3" width="1.2" height="1.2" fill="#9c9c9c"/><rect x="3" y="3" width="1.2" height="1.2" fill="#9c9c9c"/><rect x="0" y="6" width="1.2" height="1.2" fill="#9c9c9c"/><rect x="3" y="6" width="1.2" height="1.2" fill="#9c9c9c"/><rect x="0" y="9" width="1.2" height="1.2" fill="#9c9c9c"/><rect x="3" y="9" width="1.2" height="1.2" fill="#9c9c9c"/><rect x="0" y="12" width="1.2" height="1.2" fill="#9c9c9c"/><rect x="3" y="12" width="1.2" height="1.2" fill="#9c9c9c"/><rect x="0" y="15" width="1.2" height="1.2" fill="#9c9c9c"/><rect x="3" y="15" width="1.2" height="1.2" fill="#9c9c9c"/></svg>
<svg class="i" style="left:775px;top:50px" width="24" height="24" viewBox="0 0 24 24"><path d="M3 4c4-2 7 0 10-1s6 1 7 3v8M3 4v13c3 1 5 0 8 1" fill="#eeeae2" stroke="#bdbdbd" stroke-dasharray="2 1.5"/><path d="M12 9l9 6-4 .7 2.6 4.4-1.8 1-2.5-4.3-3 2.7z" fill="#fff" stroke="#9d9d9d" stroke-width=".9"/></svg>
<div class="dd" style="left:805px;top:60px"></div>
<svg class="i" style="left:818px;top:50px" width="24" height="24" viewBox="0 0 24 24"><rect x="2" y="4" width="20" height="16" fill="#f2f2f2" stroke="#cdcdcd"/><path d="M2 9h20M2 14h20M9 4v16" stroke="#d4d4d4"/></svg>
<div class="dd" style="left:849.5px;top:60px"></div>
<svg class="i" style="left:869px;top:50px" width="24" height="24" viewBox="0 0 24 24"><rect x="2" y="2" width="11" height="11" fill="#fde45b" stroke="#c6a41e"/><rect x="6" y="6" width="11" height="11" fill="#fde45b" stroke="#c6a41e"/><circle cx="18" cy="18" r="5" fill="#d62f2f"/><circle cx="18" cy="18" r="3" fill="none" stroke="#fff" stroke-width="1"/><path d="M16 20l4-4" stroke="#fff"/></svg>
<div class="dd" style="left:895px;top:60px"></div>
<svg class="i" style="left:910px;top:50px" width="24" height="24" viewBox="0 0 24 24"><rect x="2" y="2" width="13" height="13" fill="#fde45b" stroke="#c6a41e"/><path d="M18 23l-3-5a3.2 3.2 0 1 1 6 0z" fill="#7a9ab8"/><circle cx="18" cy="16.5" r="1.2" fill="#fff"/></svg>
<div class="dd" style="left:940px;top:60px"></div>
<svg class="i" style="left:960px;top:54px" width="5" height="17" viewBox="0 0 5 17"><rect x="0" y="0" width="1.2" height="1.2" fill="#9c9c9c"/><rect x="3" y="0" width="1.2" height="1.2" fill="#9c9c9c"/><rect x="0" y="3" width="1.2" height="1.2" fill="#9c9c9c"/><rect x="3" y="3" width="1.2" height="1.2" fill="#9c9c9c"/><rect x="0" y="6" width="1.2" height="1.2" fill="#9c9c9c"/><rect x="3" y="6" width="1.2" height="1.2" fill="#9c9c9c"/><rect x="0" y="9" width="1.2" height="1.2" fill="#9c9c9c"/><rect x="3" y="9" width="1.2" height="1.2" fill="#9c9c9c"/><rect x="0" y="12" width="1.2" height="1.2" fill="#9c9c9c"/><rect x="3" y="12" width="1.2" height="1.2" fill="#9c9c9c"/><rect x="0" y="15" width="1.2" height="1.2" fill="#9c9c9c"/><rect x="3" y="15" width="1.2" height="1.2" fill="#9c9c9c"/></svg>
<svg class="i" style="left:970px;top:50px" width="24" height="24" viewBox="0 0 24 24"><circle cx="10" cy="10" r="8.5" fill="#5a8ccc" stroke="#3d6ea8" stroke-width=".8"/><text x="7.2" y="15" font-size="12" font-style="italic" font-weight="bold" fill="#fff" font-family="Liberation Serif">i</text><path d="M13 11l8.5 6-4 .6 2.5 4.4-1.8 1-2.5-4.3-2.8 2.7z" fill="#fff" stroke="#444" stroke-width=".9"/></svg>
<svg class="i" style="left:1004px;top:50px" width="24" height="24" viewBox="0 0 24 24"><rect x="3" y="3" width="18" height="18" fill="#fafafa" stroke="#cfcfcf"/><path d="M3 8h18M3 13h18M3 18h18" stroke="#d5d5d5"/><circle cx="8" cy="8" r="1.8" fill="none" stroke="#ccc"/><circle cx="14" cy="13" r="1.8" fill="none" stroke="#ccc"/><circle cx="11" cy="18" r="1.8" fill="none" stroke="#ccc"/></svg>
<svg class="i" style="left:1037px;top:50px" width="24" height="24" viewBox="0 0 24 24"><path d="M12 1.5l1.6 3 3.2-1.2.2 3.4 3.4.2-1.2 3.2 3 1.6-3 1.9 1.2 3.2-3.4.2-.2 3.4-3.2-1.2-1.6 3-1.9-3-3.2 1.2-.2-3.4-3.4-.2 1.2-3.2-3-1.9 3-1.6-1.2-3.2 3.4-.2.2-3.4 3.2 1.2z" fill="#5a8ccc"/><circle cx="12" cy="12" r="3.5" fill="#f8f8f8"/></svg>
<svg class="i" style="left:1069px;top:50px" width="24" height="24" viewBox="0 0 24 24"><path d="M4 3h15v4h-1.5l-.5-2H8l6 7-6.5 7H17l.8-2.5H19.5L19 21H4v-1.5L11 12 4 4.5z" fill="#9b1d9b"/></svg>
<svg class="i" style="left:1103px;top:50px" width="24" height="24" viewBox="0 0 24 24"><rect x="3" y="3" width="18" height="18" fill="#fafafa" stroke="#cfcfcf"/><path d="M3 7h18M6 11h12M6 14h12M6 17h12" stroke="#d8d8d8"/></svg>
<div class="dd" style="left:1132.5px;top:60px"></div>
<svg class="i" style="left:1148px;top:50px" width="24" height="24" viewBox="0 0 24 24"><path d="M4 4h16M4 2v4M20 2v4" stroke="#26456f" stroke-width="1.5"/><rect x="1.5" y="10" width="21" height="7" fill="#f4f4f4" stroke="#555" stroke-width="1.3"/><path d="M5 10v3M8 10v2M11 10v3M14 10v2M17 10v3M20 10v2" stroke="#555"/></svg>
<div class="dd" style="left:1178px;top:60px"></div>
<svg class="i" style="left:1193px;top:50px" width="24" height="24" viewBox="0 0 24 24"><path d="M4 3h16a3 3 0 0 1 3 3v6a3 3 0 0 1-3 3H9l-4 4v-4H4a3 3 0 0 1-3-3V6a3 3 0 0 1 3-3z" fill="#f9ef90" stroke="#d2b84c"/><circle cx="5" cy="19" r="2.5" fill="#6aa86a"/></svg>
<div class="a" style="left:1222px;top:47px;width:44px;height:31px;border:1px solid #cfcfcf;border-radius:3px;background:#e4e4e4"></div><div class="a" style="left:1254px;top:47px;width:1px;height:31px;background:#cfcfcf"></div>
<svg class="i" style="left:1226px;top:50px" width="24" height="24" viewBox="0 0 24 24"><circle cx="12" cy="12" r="7" fill="none" stroke="#c6c6c6" stroke-width="2"/><circle cx="12" cy="12" r="3" fill="none" stroke="#c6c6c6" stroke-width="1.5"/><path d="M13 12l7 6-3 .5 2 3" stroke="#c6c6c6" fill="#ddd"/></svg>
<div class="dd" style="left:1256px;top:60px"></div>
<svg class="i" style="left:5px;top:93px" width="5" height="17" viewBox="0 0 5 17"><rect x="0" y="0" width="1.2" height="1.2" fill="#9c9c9c"/><rect x="3" y="0" width="1.2" height="1.2" fill="#9c9c9c"/><rect x="0" y="3" width="1.2" height="1.2" fill="#9c9c9c"/><rect x="3" y="3" width="1.2" height="1.2" fill="#9c9c9c"/><rect x="0" y="6" width="1.2" height="1.2" fill="#9c9c9c"/><rect x="3" y="6" width="1.2" height="1.2" fill="#9c9c9c"/><rect x="0" y="9" width="1.2" height="1.2" fill="#9c9c9c"/><rect x="3" y="9" width="1.2" height="1.2" fill="#9c9c9c"/><rect x="0" y="12" width="1.2" height="1.2" fill="#9c9c9c"/><rect x="3" y="12" width="1.2" height="1.2" fill="#9c9c9c"/><rect x="0" y="15" width="1.2" height="1.2" fill="#9c9c9c"/><rect x="3" y="15" width="1.2" height="1.2" fill="#9c9c9c"/></svg>
<svg class="i" style="left:17px;top:89px" width="24" height="24" viewBox="0 0 24 24"><path d="M2 8l10-3 3 10-10 3z" fill="#d9652b"/><path d="M5 6l9-3 3 10-9 3z" fill="#f2c94c"/><path d="M8 4h12v12H8z" fill="#5a8ccc" stroke="#3d6ea8" stroke-width=".6" transform="rotate(8 14 10)"/><rect x="13" y="14" width="9" height="9" rx="1" fill="#4b9a5b"/><path d="M17.5 15.5v6M14.5 18.5h6" stroke="#fff" stroke-width="2"/></svg>
<svg class="i" style="left:50px;top:89px" width="24" height="24" viewBox="0 0 24 24"><circle cx="12" cy="8" r="6.5" fill="#6d9ad6" stroke="#3d6ea8" stroke-width=".6"/><path d="M9 5l3 1 1 3-3 1zM14 4l3 2-2 3z" fill="#2d5a8e"/><path d="M2 11l4-3h14l-4 3z" fill="#f5e17a" stroke="#333" stroke-width=".7"/><path d="M2 11h14v10H2z" fill="#e2bf1e" stroke="#333" stroke-width=".7"/><path d="M16 11l4-3v10l-4 3z" fill="#fbf08a" stroke="#333" stroke-width=".7"/><rect x="14" y="14" width="8.5" height="8.5" rx="1" fill="#d9a60e"/><path d="M18.2 15.2v6M15.2 18.2h6M16.1 16.1l4.2 4.2M20.3 16.1l-4.2 4.2" stroke="#fff" stroke-width="1"/></svg>
<svg class="i" style="left:83px;top:89px" width="24" height="24" viewBox="0 0 24 24"><path d="M2.5 3L9 19 16 4" fill="none" stroke="#333" stroke-width="1.3"/><circle cx="2.5" cy="3" r="1.7" fill="#fff" stroke="#333"/><circle cx="9" cy="19" r="1.7" fill="#fff" stroke="#333"/><circle cx="16" cy="4" r="1.7" fill="#fff" stroke="#333"/><rect x="14" y="14" width="8.5" height="8.5" rx="1" fill="#d9a60e"/><path d="M18.2 15.2v6M15.2 18.2h6M16.1 16.1l4.2 4.2M20.3 16.1l-4.2 4.2" stroke="#fff" stroke-width="1"/></svg>
<svg class="i" style="left:116px;top:89px" width="24" height="24" viewBox="0 0 24 24"><path d="M21.5 1.5c-6 1-12 5-15 11-1.5 3-2.5 6-4 10 2-2.5 3.5-4 5-5 5-1 9-4 11-9 1.5-3 2.5-5 3-7z" fill="#8fb0d8" stroke="#5a7fae" stroke-width=".7"/><path d="M21 2C15 7 9 13 3 22" stroke="#3d5f8e" stroke-width=".8" fill="none"/><path d="M9 12l5 1M11 9l5 1M13 7l5 0" stroke="#5a7fae" stroke-width=".5"/><rect x="14" y="14" width="8.5" height="8.5" rx="1" fill="#d9a60e"/><path d="M18.2 15.2v6M15.2 18.2h6M16.1 16.1l4.2 4.2M20.3 16.1l-4.2 4.2" stroke="#fff" stroke-width="1"/></svg>
<svg class="i" style="left:150px;top:89px" width="24" height="24" viewBox="0 0 24 24"><rect x="3" y="6" width="16" height="10" fill="#5a8ccc" stroke="#26456f" stroke-width=".8"/><path d="M5 6V3M8 6V3M11 6V3M14 6V3M17 6V3M5 16v3M8 16v3M11 16v3M14 16v3" stroke="#26456f"/><rect x="14" y="14" width="8.5" height="8.5" rx="1" fill="#d9a60e"/><path d="M18.2 15.2v6M15.2 18.2h6M16.1 16.1l4.2 4.2M20.3 16.1l-4.2 4.2" stroke="#fff" stroke-width="1"/></svg>
<svg class="i" style="left:182px;top:89px" width="24" height="24" viewBox="0 0 24 24"><rect x="2" y="2" width="19" height="19" fill="#7aa3d6" stroke="#26456f" stroke-width=".8"/><path d="M2 11.5h19M11.5 2v19M2 2l9.5 9.5M21 2l-9.5 9.5M2 16h9.5M6.5 11.5v9.5" stroke="#26456f" stroke-width=".8"/><rect x="14" y="14" width="8.5" height="8.5" rx="1" fill="#d9a60e"/><path d="M18.2 15.2v6M15.2 18.2h6M16.1 16.1l4.2 4.2M20.3 16.1l-4.2 4.2" stroke="#fff" stroke-width="1"/></svg>
<svg class="i" style="left:215px;top:89px" width="24" height="24" viewBox="0 0 24 24"><rect x="2" y="2" width="20" height="20" rx="1.5" fill="#a7c0de" stroke="#26456f" stroke-width=".8"/><path d="M4 4l6 14 8-14" fill="none" stroke="#26456f" stroke-width="1"/><rect x="14" y="14" width="8.5" height="8.5" rx="1" fill="#d9a60e"/><path d="M18.2 15.2v6M15.2 18.2h6M16.1 16.1l4.2 4.2M20.3 16.1l-4.2 4.2" stroke="#fff" stroke-width="1"/></svg>
<svg class="i" style="left:253px;top:93px" width="5" height="17" viewBox="0 0 5 17"><rect x="0" y="0" width="1.2" height="1.2" fill="#9c9c9c"/><rect x="3" y="0" width="1.2" height="1.2" fill="#9c9c9c"/><rect x="0" y="3" width="1.2" height="1.2" fill="#9c9c9c"/><rect x="3" y="3" width="1.2" height="1.2" fill="#9c9c9c"/><rect x="0" y="6" width="1.2" height="1.2" fill="#9c9c9c"/><rect x="3" y="6" width="1.2" height="1.2" fill="#9c9c9c"/><rect x="0" y="9" width="1.2" height="1.2" fill="#9c9c9c"/><rect x="3" y="9" width="1.2" height="1.2" fill="#9c9c9c"/><rect x="0" y="12" width="1.2" height="1.2" fill="#9c9c9c"/><rect x="3" y="12" width="1.2" height="1.2" fill="#9c9c9c"/><rect x="0" y="15" width="1.2" height="1.2" fill="#9c9c9c"/><rect x="3" y="15" width="1.2" height="1.2" fill="#9c9c9c"/></svg>
<svg class="i" style="left:265px;top:89px" width="24" height="24" viewBox="0 0 24 24"><path d="M3 20l3-8 9-9 3 3-9 9z" fill="#e4e4e4" stroke="#cfcfcf"/><path d="M8 21l3-8 8-8 3 3-8 8z" fill="#e9e9e9" stroke="#d2d2d2"/></svg>
<div class="dd" style="left:283px;top:109px"></div>
<svg class="i" style="left:296px;top:89px" width="24" height="24" viewBox="0 0 24 24"><path d="M4 21l2-6 11-11 3 3-11 11z" fill="#ececec" stroke="#d0d0d0"/></svg>
<svg class="i" style="left:329px;top:89px" width="24" height="24" viewBox="0 0 24 24"><rect x="2.5" y="2.5" width="19" height="19" rx="2" fill="#ececec" stroke="#d6d6d6"/><rect x="6" y="4" width="12" height="7" fill="#f7f7f7"/></svg>
<svg class="i" style="left:363px;top:89px" width="24" height="24" viewBox="0 0 24 24"><path d="M3 21L21 3" stroke="#cfcfcf" stroke-dasharray="2 2"/><rect x="1" y="19" width="3" height="3" fill="none" stroke="#cfcfcf"/><rect x="19" y="1" width="3" height="3" fill="none" stroke="#cfcfcf"/></svg>
<div class="dd" style="left:393px;top:99px"></div>
<svg class="i" style="left:409px;top:89px" width="24" height="24" viewBox="0 0 24 24"><path d="M3 8c0-4 5-6 9-4s8 0 9 3-2 6-6 6-6 3-8 2-4-3-4-7z" fill="#e6e6e6"/><rect x="12" y="13" width="9" height="9" fill="#d6d6d6"/></svg>
<svg class="i" style="left:443px;top:89px" width="24" height="24" viewBox="0 0 24 24"><circle cx="5" cy="5" r="2" fill="none" stroke="#c9c9c9"/><path d="M7 5h12" stroke="#ccc"/><path d="M4 21l4-14" stroke="#ccc"/><path d="M10 20l9-9M14 12l4 4" stroke="#cdcdcd" stroke-width="2.5"/></svg>
<div class="dd" style="left:470.5px;top:99px"></div>
<svg class="i" style="left:486px;top:89px" width="24" height="24" viewBox="0 0 24 24"><path d="M2 4h15M2 9h15M2 14h15M2 19h15" stroke="#d6d6d6" stroke-width="2.5"/><path d="M9 19l2-5 9-9 2 2-9 9z" fill="#e8e8e8" stroke="#cfcfcf"/></svg>
<svg class="i" style="left:518px;top:89px" width="24" height="24" viewBox="0 0 24 24"><rect x="5" y="6" width="14" height="16" fill="#ececec" stroke="#d6cfcf"/><path d="M3 5h18M9 3h6M9 9v10M12 9v10M15 9v10" stroke="#d6cfcf" stroke-width="1.3"/></svg>
<svg class="i" style="left:552px;top:89px" width="24" height="24" viewBox="0 0 24 24"><circle cx="5" cy="17" r="3.2" fill="none" stroke="#cfc8c8" stroke-width="1.4"/><circle cx="19" cy="17" r="3.2" fill="none" stroke="#cfc8c8" stroke-width="1.4"/><path d="M7 15L19 4M17 15L5 4" stroke="#d2d2d2" stroke-width="1.4"/></svg>
<svg class="i" style="left:584px;top:89px" width="24" height="24" viewBox="0 0 24 24"><path d="M4 6h9l3 3v13H4z" fill="#f6f6f6" stroke="#d4d4d4"/><path d="M8 2h9l3 3v13" fill="none" stroke="#d4d4d4"/><path d="M6 12h8M6 15h8M6 18h8" stroke="#ddd"/></svg>
<svg class="i" style="left:618px;top:89px" width="24" height="24" viewBox="0 0 24 24"><rect x="3" y="3" width="18" height="19" fill="#f4f4f4" stroke="#d4d4d4"/><rect x="7" y="1" width="10" height="4" fill="#e6e6e6" stroke="#d0d0d0"/><path d="M6 10h12M6 13h12M6 16h12" stroke="#ddd"/></svg>
<svg class="i" style="left:651px;top:89px" width="24" height="24" viewBox="0 0 24 24"><path d="M3 10l7-7v4c7 0 11 4 11 10-2-3-5-5-11-5v4z" fill="#ddd" transform="translate(0 2)"/></svg>
<svg class="i" style="left:684px;top:89px" width="24" height="24" viewBox="0 0 24 24"><path d="M21 10l-7-7v4C7 7 3 11 3 17c2-3 5-5 11-5v4z" fill="#ddd" transform="translate(0 2)"/></svg>
<svg class="i" style="left:722px;top:93px" width="5" height="17" viewBox="0 0 5 17"><rect x="0" y="0" width="1.2" height="1.2" fill="#9c9c9c"/><rect x="3" y="0" width="1.2" height="1.2" fill="#9c9c9c"/><rect x="0" y="3" width="1.2" height="1.2" fill="#9c9c9c"/><rect x="3" y="3" width="1.2" height="1.2" fill="#9c9c9c"/><rect x="0" y="6" width="1.2" height="1.2" fill="#9c9c9c"/><rect x="3" y="6" width="1.2" height="1.2" fill="#9c9c9c"/><rect x="0" y="9" width="1.2" height="1.2" fill="#9c9c9c"/><rect x="3" y="9" width="1.2" height="1.2" fill="#9c9c9c"/><rect x="0" y="12" width="1.2" height="1.2" fill="#9c9c9c"/><rect x="3" y="12" width="1.2" height="1.2" fill="#9c9c9c"/><rect x="0" y="15" width="1.2" height="1.2" fill="#9c9c9c"/><rect x="3" y="15" width="1.2" height="1.2" fill="#9c9c9c"/></svg>
<svg class="i" style="left:732px;top:89px" width="24" height="24" viewBox="0 0 24 24"><path d="M1 11l4-5h17v10H5z" fill="#f4f4f4" stroke="#d4d4d4"/><text x="6.5" y="14" font-size="7" fill="#c4c4c4" font-weight="bold" font-family="Liberation Sans">abc</text></svg>
<svg class="i" style="left:766px;top:89px" width="24" height="24" viewBox="0 0 24 24"><circle cx="10" cy="10" r="7" fill="#e6e0d6"/><path d="M10 10V3a7 7 0 0 1 7 7z" fill="#d6dbe0"/><rect x="15" y="14" width="3" height="8" fill="#d8d8d8"/><rect x="19" y="17" width="3" height="5" fill="#d8d8d8"/></svg>
<div class="a" style="left:798px;top:91px;width:1px;height:20px;background:#cfcfcf"></div>
<svg class="i" style="left:806px;top:89px" width="24" height="24" viewBox="0 0 24 24"><path d="M1 11l5-5h17v10H6z" fill="#cfe0f4" stroke="#4a78b8" stroke-width="1.2"/><text x="7" y="14" font-size="8" fill="#111" font-weight="bold" font-family="Liberation Sans">ab</text><circle cx="19" cy="18" r="4" fill="#c0171c"/><path d="M18 8v8" stroke="#888" stroke-width="1.2"/></svg>
<svg class="i" style="left:840px;top:89px" width="24" height="24" viewBox="0 0 24 24"><path d="M1 11l5-5h17v10H6z" fill="#fff" stroke="#e03030" stroke-width="1.3"/><text x="6" y="14.5" font-size="8.5" fill="#e03030" font-weight="bold" font-family="Liberation Sans">abc</text></svg>
<div class="a" style="left:871px;top:91px;width:1px;height:20px;background:#cfcfcf"></div>
<svg class="i" style="left:879px;top:89px" width="24" height="24" viewBox="0 0 24 24"><path d="M1 10l5-5h15v10H6z" fill="#f7e36a" stroke="#c9a21a" stroke-width="1"/><text x="6" y="13.5" font-size="8" fill="#222" font-weight="bold" font-family="Liberation Sans">ab</text><path d="M17 9v8" stroke="#666" stroke-width="1.2"/><circle cx="18" cy="18" r="4" fill="#a61c1c"/></svg>
<svg class="i" style="left:912px;top:89px" width="24" height="24" viewBox="0 0 24 24"><path d="M1 10l5-5h15v10H6z" fill="#f7e36a" stroke="#c9a21a" stroke-width="1"/><text x="6" y="13.5" font-size="8" fill="#222" font-weight="bold" font-family="Liberation Sans">abc</text><path d="M7 19c3-4 11-4 15 0-4 4-12 4-15 0z" fill="#fff" stroke="#333" stroke-width=".9"/><circle cx="14.5" cy="19" r="2.4" fill="#4a78b8"/></svg>
<svg class="i" style="left:945px;top:89px" width="24" height="24" viewBox="0 0 24 24"><path d="M1 10l5-5h15v10H6z" fill="#f7e36a" stroke="#c9a21a" stroke-width="1"/><text x="6" y="13.5" font-size="8" fill="#222" font-weight="bold" font-family="Liberation Sans">abc</text><rect x="13" y="13" width="10" height="10" rx="1" fill="#2d4a6a"/><path d="M15 18h5M18 15.5l2.5 2.5-2.5 2.5" stroke="#fff" stroke-width="1.6" fill="none"/></svg>
<svg class="i" style="left:978px;top:89px" width="24" height="24" viewBox="0 0 24 24"><path d="M1 10l5-5h15v10H6z" fill="#f7e36a" stroke="#c9a21a" stroke-width="1"/><text x="6" y="13.5" font-size="8" fill="#222" font-weight="bold" font-family="Liberation Sans">abc</text><rect x="13" y="13" width="10" height="10" rx="1" fill="#2d4a6a"/><circle cx="18" cy="18" r="2.6" fill="none" stroke="#fff" stroke-width="1.3"/></svg>
<svg class="i" style="left:1011px;top:89px" width="24" height="24" viewBox="0 0 24 24"><path d="M1 10l5-5h15v10H6z" fill="#f7e36a" stroke="#c9a21a" stroke-width="1"/><text x="6" y="13.5" font-size="8" fill="#222" font-weight="bold" font-family="Liberation Sans">abc</text><rect x="13" y="13" width="10" height="10" rx="1" fill="#c9a21a"/><path d="M15 21l1-3 4-4 1.5 1.5-4 4z" fill="#fff"/></svg>
<svg class="i" style="left:1048px;top:93px" width="5" height="17" viewBox="0 0 5 17"><rect x="0" y="0" width="1.2" height="1.2" fill="#9c9c9c"/><rect x="3" y="0" width="1.2" height="1.2" fill="#9c9c9c"/><rect x="0" y="3" width="1.2" height="1.2" fill="#9c9c9c"/><rect x="3" y="3" width="1.2" height="1.2" fill="#9c9c9c"/><rect x="0" y="6" width="1.2" height="1.2" fill="#9c9c9c"/><rect x="3" y="6" width="1.2" height="1.2" fill="#9c9c9c"/><rect x="0" y="9" width="1.2" height="1.2" fill="#9c9c9c"/><rect x="3" y="9" width="1.2" height="1.2" fill="#9c9c9c"/><rect x="0" y="12" width="1.2" height="1.2" fill="#9c9c9c"/><rect x="3" y="12" width="1.2" height="1.2" fill="#9c9c9c"/><rect x="0" y="15" width="1.2" height="1.2" fill="#9c9c9c"/><rect x="3" y="15" width="1.2" height="1.2" fill="#9c9c9c"/></svg>
<svg class="i" style="left:1060px;top:89px" width="24" height="24" viewBox="0 0 24 24"><circle cx="11" cy="11" r="10" fill="#6d9ad6" stroke="#3d6ea8" stroke-width=".8"/><ellipse cx="11" cy="11" rx="4.5" ry="10" fill="none" stroke="#dfe8f4" stroke-width=".9"/><path d="M1 11h20M3 6h16M3 16h16" stroke="#dfe8f4" stroke-width=".9"/><path d="M5 7c2-1 4 1 3 3s-3 1-3-3zM12 4c3 0 5 2 4 4s-3 0-4-4z" fill="#555" opacity=".6"/><rect x="13" y="13" width="10" height="10" fill="#4b9a5b"/><path d="M18 14.5v7M14.5 18h7" stroke="#fff" stroke-width="2"/></svg>
<svg class="i" style="left:1093px;top:89px" width="24" height="24" viewBox="0 0 24 24"><circle cx="11" cy="11" r="10" fill="#6d9ad6" stroke="#3d6ea8" stroke-width=".8"/><ellipse cx="11" cy="11" rx="4.5" ry="10" fill="none" stroke="#dfe8f4" stroke-width=".9"/><path d="M1 11h20M3 6h16M3 16h16" stroke="#dfe8f4" stroke-width=".9"/><path d="M5 7c2-1 4 1 3 3s-3 1-3-3zM12 4c3 0 5 2 4 4s-3 0-4-4z" fill="#555" opacity=".6"/><rect x="13" y="13" width="10" height="10" fill="#4b9a5b"/><circle cx="17.5" cy="17.5" r="2.5" fill="none" stroke="#fff" stroke-width="1.3"/><path d="M19 19l2.5 2.5" stroke="#fff" stroke-width="1.3"/></svg>
<svg class="i" style="left:1131px;top:93px" width="5" height="17" viewBox="0 0 5 17"><rect x="0" y="0" width="1.2" height="1.2" fill="#9c9c9c"/><rect x="3" y="0" width="1.2" height="1.2" fill="#9c9c9c"/><rect x="0" y="3" width="1.2" height="1.2" fill="#9c9c9c"/><rect x="3" y="3" width="1.2" height="1.2" fill="#9c9c9c"/><rect x="0" y="6" width="1.2" height="1.2" fill="#9c9c9c"/><rect x="3" y="6" width="1.2" height="1.2" fill="#9c9c9c"/><rect x="0" y="9" width="1.2" height="1.2" fill="#9c9c9c"/><rect x="3" y="9" width="1.2" height="1.2" fill="#9c9c9c"/><rect x="0" y="12" width="1.2" height="1.2" fill="#9c9c9c"/><rect x="3" y="12" width="1.2" height="1.2" fill="#9c9c9c"/><rect x="0" y="15" width="1.2" height="1.2" fill="#9c9c9c"/><rect x="3" y="15" width="1.2" height="1.2" fill="#9c9c9c"/></svg>
<svg class="i" style="left:1142px;top:89px" width="24" height="24" viewBox="0 0 24 24"><path d="M11.5 2c-4 0-5 1.5-5 3.5V8h5v1H4.5C2.5 9 1 10.5 1 14s1.5 5 3.5 5H6v-3c0-2 1.7-3.5 3.5-3.5h5c1.7 0 3-1.3 3-3V5.5C17.5 3.5 15.5 2 11.5 2z" fill="#3c78aa"/><path d="M12.5 22c4 0 5-1.5 5-3.5V16h-5v-1h7c2 0 3.5-1.5 3.5-5S21.5 5 19.5 5H18v3c0 2-1.7 3.5-3.5 3.5h-5c-1.7 0-3 1.3-3 3v4c0 2 2 3.5 6 3.5z" fill="#f5cf3a"/><path d="M15 19l5 2-5 2" stroke="#444" fill="none"/></svg>
<svg class="i" style="left:1175px;top:89px" width="24" height="24" viewBox="0 0 24 24"><path d="M2 21V14l6-5 6 5 4 3 4 1v3z" fill="#1dd61d" stroke="#111" stroke-width="1.3"/><path d="M18 2l1 2.5 2.5-1-1 2.5 2.5 1-2.5 1 1 2.5-2.5-1-1 2.5-1-2.5-2.5 1 1-2.5-2.5-1 2.5-1-1-2.5 2.5 1z" fill="#f5f13a"/></svg>
<svg class="i" style="left:1208px;top:89px" width="24" height="24" viewBox="0 0 24 24"><circle cx="12" cy="4" r="2.6" fill="#f0a81c" stroke="#a86e00" stroke-width=".6"/><path d="M8.5 8h7v8h-1.5v7h-4v-7H8.5z" fill="#f0a81c" stroke="#a86e00" stroke-width=".6"/></svg>
<svg class="i" style="left:1241px;top:89px" width="24" height="24" viewBox="0 0 24 24"><circle cx="9.5" cy="9.5" r="8.5" fill="#1d8a2a"/><text x="6.8" y="14.5" font-size="12" font-style="italic" font-weight="bold" fill="#fff" font-family="Liberation Serif">i</text><path d="M13 11l8.5 6-4 .6 2.5 4.4-1.8 1-2.5-4.3-2.8 2.7z" fill="#fff" stroke="#444" stroke-width=".9"/></svg>
<svg class="i" style="left:1278px;top:93px" width="5" height="17" viewBox="0 0 5 17"><rect x="0" y="0" width="1.2" height="1.2" fill="#9c9c9c"/><rect x="3" y="0" width="1.2" height="1.2" fill="#9c9c9c"/><rect x="0" y="3" width="1.2" height="1.2" fill="#9c9c9c"/><rect x="3" y="3" width="1.2" height="1.2" fill="#9c9c9c"/><rect x="0" y="6" width="1.2" height="1.2" fill="#9c9c9c"/><rect x="3" y="6" width="1.2" height="1.2" fill="#9c9c9c"/><rect x="0" y="9" width="1.2" height="1.2" fill="#9c9c9c"/><rect x="3" y="9" width="1.2" height="1.2" fill="#9c9c9c"/><rect x="0" y="12" width="1.2" height="1.2" fill="#9c9c9c"/><rect x="3" y="12" width="1.2" height="1.2" fill="#9c9c9c"/><rect x="0" y="15" width="1.2" height="1.2" fill="#9c9c9c"/><rect x="3" y="15" width="1.2" height="1.2" fill="#9c9c9c"/></svg>
<svg class="i" style="left:1290px;top:89px" width="24" height="24" viewBox="0 0 24 24"><rect x="2" y="2" width="20" height="21" fill="#6a9bd0" stroke="#222" stroke-width=".8"/><rect x="2" y="2" width="5" height="21" fill="#26313d"/><text x="10.5" y="17" font-size="13" fill="#fff" font-family="Liberation Sans">?</text></svg>
<svg class="i" style="left:1328px;top:93px" width="5" height="17" viewBox="0 0 5 17"><rect x="0" y="0" width="1.2" height="1.2" fill="#9c9c9c"/><rect x="3" y="0" width="1.2" height="1.2" fill="#9c9c9c"/><rect x="0" y="3" width="1.2" height="1.2" fill="#9c9c9c"/><rect x="3" y="3" width="1.2" height="1.2" fill="#9c9c9c"/><rect x="0" y="6" width="1.2" height="1.2" fill="#9c9c9c"/><rect x="3" y="6" width="1.2" height="1.2" fill="#9c9c9c"/><rect x="0" y="9" width="1.2" height="1.2" fill="#9c9c9c"/><rect x="3" y="9" width="1.2" height="1.2" fill="#9c9c9c"/><rect x="0" y="12" width="1.2" height="1.2" fill="#9c9c9c"/><rect x="3" y="12" width="1.2" height="1.2" fill="#9c9c9c"/><rect x="0" y="15" width="1.2" height="1.2" fill="#9c9c9c"/><rect x="3" y="15" width="1.2" height="1.2" fill="#9c9c9c"/></svg>
<svg class="i" style="left:5px;top:132px" width="5" height="17" viewBox="0 0 5 17"><rect x="0" y="0" width="1.2" height="1.2" fill="#9c9c9c"/><rect x="3" y="0" width="1.2" height="1.2" fill="#9c9c9c"/><rect x="0" y="3" width="1.2" height="1.2" fill="#9c9c9c"/><rect x="3" y="3" width="1.2" height="1.2" fill="#9c9c9c"/><rect x="0" y="6" width="1.2" height="1.2" fill="#9c9c9c"/><rect x="3" y="6" width="1.2" height="1.2" fill="#9c9c9c"/><rect x="0" y="9" width="1.2" height="1.2" fill="#9c9c9c"/><rect x="3" y="9" width="1.2" height="1.2" fill="#9c9c9c"/><rect x="0" y="12" width="1.2" height="1.2" fill="#9c9c9c"/><rect x="3" y="12" width="1.2" height="1.2" fill="#9c9c9c"/><rect x="0" y="15" width="1.2" height="1.2" fill="#9c9c9c"/><rect x="3" y="15" width="1.2" height="1.2" fill="#9c9c9c"/></svg>
<svg class="i" style="left:17px;top:128px" width="24" height="24" viewBox="0 0 24 24"><rect x="2" y="3" width="20" height="18" fill="#f4f4f4" stroke="#d8d8d8"/><path d="M2 12h10M7 12v9M2 3l10 9M12 3L2 12" stroke="#d8d8d8"/><path d="M9 21l2-5 9-9 2 2-9 9z" fill="#e8e8e8" stroke="#d2d2d2"/></svg>
<div class="dd" style="left:47px;top:138px"></div>
<svg class="i" style="left:62px;top:128px" width="24" height="24" viewBox="0 0 24 24"><rect x="2" y="2" width="20" height="18" fill="#e8e8e0" stroke="#d4d4d4"/><path d="M2 11h10M7 11v9M2 2l10 9" stroke="#d4d4d4"/><path d="M11 9l9 6-4 .7 2.6 4.4-1.8 1-2.5-4.3-3 2.7z" fill="#f7f7f7" stroke="#cfcfcf"/></svg>
<div class="dd" style="left:92px;top:138px"></div>
<svg class="i" style="left:107px;top:128px" width="24" height="24" viewBox="0 0 24 24"><rect x="2" y="2" width="8" height="8" fill="none" stroke="#d6d6d6"/><path d="M2 2l8 8M10 2l-8 8" stroke="#d6d6d6"/><rect x="2" y="13" width="8" height="8" fill="none" stroke="#d6d6d6"/><path d="M2 13l8 8M10 13l-8 8" stroke="#d6d6d6"/><text x="12" y="21" font-size="17" fill="#d0d0d0" font-family="Liberation Serif">ε</text></svg>
<svg class="i" style="left:140px;top:128px" width="24" height="24" viewBox="0 0 24 24"><path d="M3 3h18v18H3z" fill="#f6f6f6" stroke="#d6d6d6"/><path d="M3 3l9 14 9-14" fill="none" stroke="#d0d0d0"/></svg>
<div class="dd" style="left:170px;top:138px"></div>
<svg class="i" style="left:189px;top:132px" width="5" height="17" viewBox="0 0 5 17"><rect x="0" y="0" width="1.2" height="1.2" fill="#9c9c9c"/><rect x="3" y="0" width="1.2" height="1.2" fill="#9c9c9c"/><rect x="0" y="3" width="1.2" height="1.2" fill="#9c9c9c"/><rect x="3" y="3" width="1.2" height="1.2" fill="#9c9c9c"/><rect x="0" y="6" width="1.2" height="1.2" fill="#9c9c9c"/><rect x="3" y="6" width="1.2" height="1.2" fill="#9c9c9c"/><rect x="0" y="9" width="1.2" height="1.2" fill="#9c9c9c"/><rect x="3" y="9" width="1.2" height="1.2" fill="#9c9c9c"/><rect x="0" y="12" width="1.2" height="1.2" fill="#9c9c9c"/><rect x="3" y="12" width="1.2" height="1.2" fill="#9c9c9c"/><rect x="0" y="15" width="1.2" height="1.2" fill="#9c9c9c"/><rect x="3" y="15" width="1.2" height="1.2" fill="#9c9c9c"/></svg>
<svg class="i" style="left:201px;top:128px" width="24" height="24" viewBox="0 0 24 24"><path d="M6 20a5 5 0 0 1-1-10 7 7 0 0 1 13.5 1A4.5 4.5 0 0 1 18 20z" fill="#3d72b8"/></svg>
<svg class="i" style="left:234px;top:128px" width="24" height="24" viewBox="0 0 24 24"><path d="M6 20a5 5 0 0 1-1-10 7 7 0 0 1 13.5 1A4.5 4.5 0 0 1 18 20z" fill="#d6d6d6"/><path d="M9 18v-4h-2l3-3 3 3h-2v4zM14 12v4h-2l3 3 3-3h-2v-4z" fill="#fff"/></svg>
<div class="a" style="left:267px;top:129px;width:1px;height:22px;background:#d0d0d0"></div>
<svg class="i" style="left:274px;top:128px" width="24" height="24" viewBox="0 0 24 24"><path d="M2 8l10-5 10 5-10 5z" fill="#fbef8a" stroke="#333" stroke-width=".8"/><path d="M2 8v9l10 5V13z" fill="#e6c32b" stroke="#333" stroke-width=".8"/><path d="M22 8v9l-10 5V13z" fill="#f5dd55" stroke="#333" stroke-width=".8"/><path d="M9 2h6v5h3l-6 6-6-6h3z" fill="#4aa02c" stroke="#2a6d13" stroke-width=".6"/></svg>
<svg class="i" style="left:307px;top:128px" width="24" height="24" viewBox="0 0 24 24"><path d="M2 8l10-5 10 5-10 5z" fill="#fbef8a" stroke="#333" stroke-width=".8"/><path d="M2 8v9l10 5V13z" fill="#e6c32b" stroke="#333" stroke-width=".8"/><path d="M22 8v9l-10 5V13z" fill="#f5dd55" stroke="#333" stroke-width=".8"/><path d="M9 12h6V7h3l-6-6-6 6h3z" fill="#4aa02c" stroke="#2a6d13" stroke-width=".6"/></svg>
<svg class="i" style="left:340px;top:128px" width="24" height="24" viewBox="0 0 24 24"><path d="M3 21L17 7" stroke="#6cb42c" stroke-width="3.5"/><path d="M4 4l16 16" stroke="#6cb42c" stroke-width="3.5"/><path d="M13 3l5-1 4 4-3 3-4-4-2 0z" fill="#2d2d2d"/></svg>
<div class="t" style="left:4px;top:162px;font-size:11px">Couches</div>
<svg class="i" style="left:356px;top:163px" width="12" height="12" viewBox="0 0 12 12"><rect x=".5" y=".5" width="10" height="10" rx="1.5" fill="#f2f2f2" stroke="#b4b4b4"/><rect x="3.5" y="3.5" width="4" height="4" fill="none" stroke="#888"/></svg><svg class="i" style="left:375px;top:163px" width="12" height="12" viewBox="0 0 12 12"><rect x=".5" y=".5" width="10" height="10" rx="1.5" fill="#f2f2f2" stroke="#b4b4b4"/><path d="M3 3l5 5M8 3l-5 5" stroke="#444"/></svg>
<svg class="i" style="left:8px;top:184px" width="16" height="16" viewBox="0 0 16 16"><path d="M1 11l5-5 5 5-5 4z" fill="#d9a05a"/><path d="M1 11l2.5-2.5 2 2L3 13z" fill="#e23b3b"/><path d="M3.5 8.5L6 6l2 2-2.5 2.5z" fill="#f2c21b"/><path d="M1.5 12.5l1.5-1.5 1.5 1.5-1.5 1.5z" fill="#3d6ec8"/><path d="M8 8l7-7" stroke="#c08a3a" stroke-width="2"/></svg>
<svg class="i" style="left:33px;top:184px" width="16" height="16" viewBox="0 0 16 16"><path d="M1.5 15.5v-10h2" fill="none" stroke="#777"/><path d="M3.5 14.5h8" stroke="#777"/><rect x="4.5" y="3.5" width="8" height="9" fill="none" stroke="#777"/><path d="M7.5 1.5v8a1.3 1.3 0 0 0 2.6 0V3" fill="none" stroke="#3d6ea8" stroke-width="1"/><rect x="10" y="11" width="5.5" height="5.5" rx="1.5" fill="#4a9a4a"/><path d="M12.75 12v3.5M11 13.75h3.5" stroke="#fff" stroke-width="1.2"/></svg>
<svg class="i" style="left:58px;top:184px" width="16" height="16" viewBox="0 0 16 16"><path d="M1 7.5c3-4.5 10-4.5 13 0-3 4.5-10 4.5-13 0z" fill="#fff" stroke="#8a8a8a"/><circle cx="7" cy="7.5" r="3" fill="#5a8ccc"/><circle cx="7.5" cy="7" r="1" fill="#111"/></svg>
<svg class="i" style="left:84px;top:184px" width="16" height="16" viewBox="0 0 16 16"><path d="M1.5 3h13l-4.5 6v6.5L6 14V9z" fill="#5a8ccc" stroke="#3d6ea8" stroke-width=".6"/><rect x="1.5" y="1" width="13" height="2.2" fill="#f5e05a" stroke="#3d6ea8" stroke-width=".5"/></svg>
<svg class="i" style="left:109px;top:184px" width="16" height="16" viewBox="0 0 16 16"><text x="0" y="10" font-size="13" fill="#c9c9c9" font-family="Liberation Serif">ε</text><rect x="8" y="9" width="6" height="6" fill="#e6e6e6"/></svg>
<svg class="i" style="left:146px;top:184px" width="16" height="16" viewBox="0 0 16 16"><rect x="1" y="3" width="6" height="10" fill="none" stroke="#999" stroke-dasharray="1.5 1"/><path d="M9 1h4v8h2.5L11 14 6.5 9H9z" fill="#4a78b8"/><rect x="2" y="6" width="3" height="3" fill="#f2a31b"/></svg>
<svg class="i" style="left:170px;top:184px" width="16" height="16" viewBox="0 0 16 16"><rect x="1" y="3" width="6" height="10" fill="none" stroke="#999" stroke-dasharray="1.5 1"/><path d="M9 15h4V7h2.5L11 2 6.5 7H9z" fill="#4a78b8"/><rect x="2" y="6" width="3" height="3" fill="#f2a31b"/></svg>
<svg class="i" style="left:195px;top:184px" width="16" height="16" viewBox="0 0 16 16"><rect x="1" y="1" width="12" height="12" fill="#fff" stroke="#555"/><rect x="9" y="10" width="7" height="5" rx="1" fill="#e02a2a"/><path d="M10.5 12.5h4" stroke="#fff"/></svg>
<div class="dd" style="left:69px;top:196px"></div>
<div class="dd" style="left:94px;top:196px"></div>
<div class="dd" style="left:129px;top:190px"></div>
<div class="a" style="left:0;top:208px;width:391px;height:439px;background:#fff;border:1px solid #a9a9a9"></div>
<div class="a" style="left:376px;top:209px;width:14px;height:423px;background:#e3e3e3;border-left:1px solid #d9d9d9"></div>
<div class="a" style="left:377px;top:209px;width:13px;height:15px;background:#fcfcfc"></div>
<svg class="i" style="left:379px;top:212px" width="9" height="8" viewBox="0 0 9 8"><path d="M1 6h7L4.5 1.5z" fill="#555"/></svg>
<div class="a" style="left:377px;top:471px;width:13px;height:110px;background:#f8f8f8;border:1px solid #d3d3d3"></div>
<div class="a" style="left:377px;top:617px;width:13px;height:15px;background:#fcfcfc"></div>
<svg class="i" style="left:379px;top:621px" width="9" height="8" viewBox="0 0 9 8"><path d="M1 2h7L4.5 6.5z" fill="#555"/></svg>
<div class="a" style="left:1px;top:632px;width:389px;height:14px;background:#e3e3e3;border-top:1px solid #d9d9d9"></div>
<div class="a" style="left:1px;top:633px;width:15px;height:13px;background:#fcfcfc"></div>
<svg class="i" style="left:4px;top:635px" width="8" height="9" viewBox="0 0 8 9"><path d="M6 1v7L1.5 4.5z" fill="#555"/></svg>
<div class="a" style="left:16px;top:633px;width:165px;height:13px;background:#f8f8f8;border:1px solid #d3d3d3"></div>
<div class="a" style="left:361px;top:633px;width:15px;height:13px;background:#fcfcfc;border-right:1px solid #cfcfcf"></div>
<svg class="i" style="left:365px;top:635px" width="8" height="9" viewBox="0 0 8 9"><path d="M2 1v7L6.5 4.5z" fill="#555"/></svg>
<div class="a" style="left:376px;top:632px;width:14px;height:14px;background:#f0f0f0;border-top:1px solid #cfcfcf"></div>
<div class="a" style="left:1px;top:209px;width:375px;height:423px;overflow:hidden"><div class="cb" style="left:43px;top:-1px;width:14px;height:14px"></div><svg class="i" style="left:64px;top:-2px" width="16" height="16" viewBox="0 0 16 16"><path d="M1.5 15.5v-9h2" fill="none" stroke="#666"/><rect x="3.5" y="4.5" width="9" height="9" fill="#fff" stroke="#777"/><path d="M7 2v8a1.3 1.3 0 0 0 2.6 0V3" fill="none" stroke="#3d6ea8" stroke-width="1"/></svg><div class="t" style="left:85px;top:-1px;font-size:11px;">NbrePOINTS</div><div class="cb" style="left:43px;top:17px;width:14px;height:14px"></div><svg class="i" style="left:64px;top:16px" width="16" height="16" viewBox="0 0 16 16"><path d="M1.5 15.5v-9h2" fill="none" stroke="#666"/><rect x="3.5" y="4.5" width="9" height="9" fill="#fff" stroke="#777"/><path d="M7 2v8a1.3 1.3 0 0 0 2.6 0V3" fill="none" stroke="#3d6ea8" stroke-width="1"/></svg><div class="t" style="left:85px;top:17px;font-size:11px;">NbreImpulsions</div><svg class="i" style="left:25px;top:38px" width="10" height="8" viewBox="0 0 10 8"><path d="M1 2h8L5 6z" fill="#555"/></svg><div class="cb" style="left:43px;top:35px;width:14px;height:14px"><svg class="i" style="left:1px;top:1px" width="11" height="11" viewBox="0 0 11 11"><path d="M1.8 5.6l2.6 3.2L9.5 1.5" fill="none" stroke="#000" stroke-width="1.5"/></svg></div><svg class="i" style="left:64px;top:34px" width="16" height="16" viewBox="0 0 16 16"><path d="M1.5 15.5v-9h2" fill="none" stroke="#666"/><rect x="3.5" y="4.5" width="9" height="9" fill="#fff" stroke="#777"/><path d="M7 2v8a1.3 1.3 0 0 0 2.6 0V3" fill="none" stroke="#3d6ea8" stroke-width="1"/></svg><div class="t" style="left:85px;top:35px;font-size:11px;">GPSTime</div><svg class="i" style="left:45px;top:56px" width="10" height="8" viewBox="0 0 10 8"><path d="M1 2h8L5 6z" fill="#555"/></svg><div class="cb" style="left:63px;top:53px;width:14px;height:14px"><svg class="i" style="left:1px;top:1px" width="11" height="11" viewBox="0 0 11 11"><path d="M1.8 5.6l2.6 3.2L9.5 1.5" fill="none" stroke="#000" stroke-width="1.5"/></svg></div><svg class="i" style="left:84px;top:52px" width="16" height="16" viewBox="0 0 16 16"><path d="M1.5 15.5v-9h2" fill="none" stroke="#666"/><rect x="3.5" y="4.5" width="9" height="9" fill="#fff" stroke="#777"/><path d="M7 2v8a1.3 1.3 0 0 0 2.6 0V3" fill="none" stroke="#3d6ea8" stroke-width="1"/></svg><div class="t" style="left:105px;top:53px;font-size:11px;">Diff</div><svg class="i" style="left:66px;top:73px" width="8" height="10" viewBox="0 0 8 10"><path d="M2 1v8l4-4z" fill="#555"/></svg><div class="cb" style="left:83px;top:71px;width:14px;height:14px"><svg class="i" style="left:1px;top:1px" width="11" height="11" viewBox="0 0 11 11"><path d="M1.8 5.6l2.6 3.2L9.5 1.5" fill="none" stroke="#000" stroke-width="1.5"/></svg></div><svg class="i" style="left:104px;top:70px" width="16" height="16" viewBox="0 0 16 16"><rect x="1" y="2" width="14" height="14" fill="#b9d0ea"/><rect x="1" y="2" width="4.6" height="4.6" fill="#1d2f45"/><rect x="10.3" y="2" width="4.6" height="4.6" fill="#1d2f45"/><rect x="5.6" y="6.6" width="4.7" height="4.7" fill="#2f4a6a"/><rect x="1" y="11.3" width="4.6" height="4.7" fill="#1d2f45"/><rect x="5.6" y="11.3" width="4.7" height="4.7" fill="#8eb0d6"/></svg><div class="t" style="left:125px;top:71px;font-size:11px;font-weight:bold;letter-spacing:-0.35px;">D34_MONTPELLIER_demo_GpsTime_Diff_TA_GpsTime_diff</div><svg class="i" style="left:66px;top:91px" width="8" height="10" viewBox="0 0 8 10"><path d="M2 1v8l4-4z" fill="#555"/></svg><div class="cb" style="left:83px;top:89px;width:14px;height:14px"><svg class="i" style="left:1px;top:1px" width="11" height="11" viewBox="0 0 11 11"><path d="M1.8 5.6l2.6 3.2L9.5 1.5" fill="none" stroke="#000" stroke-width="1.5"/></svg></div><svg class="i" style="left:104px;top:88px" width="16" height="16" viewBox="0 0 16 16"><rect x="1" y="2" width="14" height="14" fill="#b9d0ea"/><rect x="1" y="2" width="4.6" height="4.6" fill="#1d2f45"/><rect x="10.3" y="2" width="4.6" height="4.6" fill="#1d2f45"/><rect x="5.6" y="6.6" width="4.7" height="4.7" fill="#2f4a6a"/><rect x="1" y="11.3" width="4.6" height="4.7" fill="#1d2f45"/><rect x="5.6" y="11.3" width="4.7" height="4.7" fill="#8eb0d6"/></svg><div class="t" style="left:125px;top:89px;font-size:11px;font-weight:bold;letter-spacing:-0.35px;">D34_PALAVAS_demo_GpsTime_Diff_TA_GpsTime_diff</div><div class="a" style="left:0;top:105px;width:375px;height:18px;background:#0078d7"></div><div class="a" style="left:122px;top:106px;width:253px;height:16px;background:#1585dc"></div><svg class="i" style="left:65px;top:110px" width="10" height="8" viewBox="0 0 10 8"><path d="M1 2h8L5 6z" fill="#111"/></svg><div class="cb" style="left:83px;top:107px;width:14px;height:14px"><svg class="i" style="left:1px;top:1px" width="11" height="11" viewBox="0 0 11 11"><path d="M1.8 5.6l2.6 3.2L9.5 1.5" fill="none" stroke="#000" stroke-width="1.5"/></svg></div><svg class="i" style="left:104px;top:106px" width="16" height="16" viewBox="0 0 16 16"><rect x="1" y="2" width="14" height="14" fill="#b9d0ea"/><rect x="1" y="2" width="4.6" height="4.6" fill="#1d2f45"/><rect x="10.3" y="2" width="4.6" height="4.6" fill="#1d2f45"/><rect x="5.6" y="6.6" width="4.7" height="4.7" fill="#2f4a6a"/><rect x="1" y="11.3" width="4.6" height="4.7" fill="#1d2f45"/><rect x="5.6" y="11.3" width="4.7" height="4.7" fill="#8eb0d6"/></svg><div class="t" style="left:125px;top:107px;font-size:11px;font-weight:bold;letter-spacing:-0.35px;color:#fff;text-decoration:underline;">D38_GRENOBLE_demo_GpsTime_Diff_TA_GpsTime_diff</div><svg class="i" style="left:66px;top:359px" width="8" height="10" viewBox="0 0 8 10"><path d="M2 1v8l4-4z" fill="#555"/></svg><div class="cb" style="left:83px;top:357px;width:14px;height:14px"><svg class="i" style="left:1px;top:1px" width="11" height="11" viewBox="0 0 11 11"><path d="M1.8 5.6l2.6 3.2L9.5 1.5" fill="none" stroke="#000" stroke-width="1.5"/></svg></div><svg class="i" style="left:104px;top:356px" width="16" height="16" viewBox="0 0 16 16"><rect x="1" y="2" width="14" height="14" fill="#b9d0ea"/><rect x="1" y="2" width="4.6" height="4.6" fill="#1d2f45"/><rect x="10.3" y="2" width="4.6" height="4.6" fill="#1d2f45"/><rect x="5.6" y="6.6" width="4.7" height="4.7" fill="#2f4a6a"/><rect x="1" y="11.3" width="4.6" height="4.7" fill="#1d2f45"/><rect x="5.6" y="11.3" width="4.7" height="4.7" fill="#8eb0d6"/></svg><div class="t" style="left:125px;top:357px;font-size:11px;font-weight:bold;letter-spacing:-0.35px;">D47_AGEN_demo_GpsTime_Diff_TA_GpsTime_diff</div><svg class="i" style="left:66px;top:377px" width="8" height="10" viewBox="0 0 8 10"><path d="M2 1v8l4-4z" fill="#555"/></svg><div class="cb" style="left:83px;top:375px;width:14px;height:14px"><svg class="i" style="left:1px;top:1px" width="11" height="11" viewBox="0 0 11 11"><path d="M1.8 5.6l2.6 3.2L9.5 1.5" fill="none" stroke="#000" stroke-width="1.5"/></svg></div><svg class="i" style="left:104px;top:374px" width="16" height="16" viewBox="0 0 16 16"><rect x="1" y="2" width="14" height="14" fill="#b9d0ea"/><rect x="1" y="2" width="4.6" height="4.6" fill="#1d2f45"/><rect x="10.3" y="2" width="4.6" height="4.6" fill="#1d2f45"/><rect x="5.6" y="6.6" width="4.7" height="4.7" fill="#2f4a6a"/><rect x="1" y="11.3" width="4.6" height="4.7" fill="#1d2f45"/><rect x="5.6" y="11.3" width="4.7" height="4.7" fill="#8eb0d6"/></svg><div class="t" style="left:125px;top:375px;font-size:11px;font-weight:bold;letter-spacing:-0.35px;">D13_CADIERE_demo_GpsTime_Diff_TA_GpsTime_diff</div><svg class="i" style="left:66px;top:395px" width="8" height="10" viewBox="0 0 8 10"><path d="M2 1v8l4-4z" fill="#555"/></svg><div class="cb" style="left:83px;top:393px;width:14px;height:14px"><svg class="i" style="left:1px;top:1px" width="11" height="11" viewBox="0 0 11 11"><path d="M1.8 5.6l2.6 3.2L9.5 1.5" fill="none" stroke="#000" stroke-width="1.5"/></svg></div><svg class="i" style="left:104px;top:392px" width="16" height="16" viewBox="0 0 16 16"><rect x="1" y="2" width="14" height="14" fill="#b9d0ea"/><rect x="1" y="2" width="4.6" height="4.6" fill="#1d2f45"/><rect x="10.3" y="2" width="4.6" height="4.6" fill="#1d2f45"/><rect x="5.6" y="6.6" width="4.7" height="4.7" fill="#2f4a6a"/><rect x="1" y="11.3" width="4.6" height="4.7" fill="#1d2f45"/><rect x="5.6" y="11.3" width="4.7" height="4.7" fill="#8eb0d6"/></svg><div class="t" style="left:125px;top:393px;font-size:11px;font-weight:bold;letter-spacing:-0.35px;">D2A_BONIFACIO_demo_GpsTime_Diff_TA_GpsTime_diff</div><svg class="i" style="left:46px;top:413px" width="8" height="10" viewBox="0 0 8 10"><path d="M2 1v8l4-4z" fill="#555"/></svg><div class="cb" style="left:63px;top:411px;width:14px;height:14px"><svg class="i" style="left:1px;top:1px" width="11" height="11" viewBox="0 0 11 11"><path d="M1.8 5.6l2.6 3.2L9.5 1.5" fill="none" stroke="#000" stroke-width="1.5"/></svg></div><svg class="i" style="left:84px;top:410px" width="16" height="16" viewBox="0 0 16 16"><path d="M1.5 15.5v-9h2" fill="none" stroke="#666"/><rect x="3.5" y="4.5" width="9" height="9" fill="#fff" stroke="#777"/><path d="M7 2v8a1.3 1.3 0 0 0 2.6 0V3" fill="none" stroke="#3d6ea8" stroke-width="1"/></svg><div class="t" style="left:105px;top:411px;font-size:11px;">Min</div><div class="t" style="left:103px;top:124px;font-size:11px">Bande 1: Height</div><div class="a" style="left:103px;top:139px;width:16px;height:16px;background:#f6c6a5"></div><div class="t" style="left:125px;top:141px;font-size:11px">&lt; 10 minures</div><div class="a" style="left:103px;top:157px;width:16px;height:16px;background:#f4a683"></div><div class="t" style="left:125px;top:159px;font-size:11px">&lt; 1 heure</div><div class="a" style="left:103px;top:175px;width:16px;height:16px;background:#f4875f"></div><div class="t" style="left:125px;top:177px;font-size:11px">&lt; 6 heure</div><div class="a" style="left:103px;top:193px;width:16px;height:16px;background:#f06243"></div><div class="t" style="left:125px;top:195px;font-size:11px">&lt; 1 jour</div><div class="a" style="left:103px;top:211px;width:16px;height:16px;background:#e3353f"></div><div class="t" style="left:125px;top:213px;font-size:11px">&lt; 15 jour</div><div class="a" style="left:103px;top:229px;width:16px;height:16px;background:#cb1b4f"></div><div class="t" style="left:125px;top:231px;font-size:11px">&lt; 30 jour</div><div class="a" style="left:103px;top:247px;width:16px;height:16px;background:#a6185b"></div><div class="t" style="left:125px;top:249px;font-size:11px">&lt; 6 mois</div><div class="a" style="left:103px;top:265px;width:16px;height:16px;background:#83205d"></div><div class="t" style="left:125px;top:267px;font-size:11px">&lt; 1 an</div><div class="a" style="left:103px;top:283px;width:16px;height:16px;background:#641f55"></div><div class="t" style="left:125px;top:285px;font-size:11px">&lt; 2 ans</div><div class="a" style="left:103px;top:301px;width:16px;height:16px;background:#451a45"></div><div class="t" style="left:125px;top:303px;font-size:11px">&lt; 3 ans</div><div class="a" style="left:103px;top:319px;width:16px;height:16px;background:#25112d"></div><div class="t" style="left:125px;top:321px;font-size:11px">&lt; 4 ans</div><div class="a" style="left:103px;top:337px;width:16px;height:16px;background:#03051a"></div><div class="t" style="left:125px;top:339px;font-size:11px">&gt; 4 ans</div></div>
<div class="a" style="left:391px;top:159px;width:6px;height:814px;background:#f0f0f0"></div>
<div class="grip" style="left:394px;top:598px;height:18px;width:3px;background-size:3px 3px"></div>
<div class="grip" style="left:185px;top:648px;height:3px;width:20px;background-size:3px 3px"></div>
<div class="t" style="left:4px;top:655px;font-size:11px">Value Tool</div>
<svg class="i" style="left:356px;top:655px" width="12" height="12" viewBox="0 0 12 12"><rect x=".5" y=".5" width="10" height="10" rx="1.5" fill="#f2f2f2" stroke="#b4b4b4"/><rect x="3.5" y="3.5" width="4" height="4" fill="none" stroke="#888"/></svg><svg class="i" style="left:375px;top:655px" width="12" height="12" viewBox="0 0 12 12"><rect x=".5" y=".5" width="10" height="10" rx="1.5" fill="#f2f2f2" stroke="#b4b4b4"/><path d="M3 3l5 5M8 3l-5 5" stroke="#444"/></svg>
<div class="cb" style="left:9px;top:682px;width:14px;height:14px"><svg class="i" style="left:1px;top:1px" width="11" height="11" viewBox="0 0 11 11"><path d="M1.8 5.6l2.6 3.2L9.5 1.5" fill="none" stroke="#000" stroke-width="1.5"/></svg></div>
<div class="t" style="left:28px;top:683px;font-size:11px">Enable</div>
<div class="a" style="left:9px;top:731px;width:373px;height:211px;background:#fafafa;border:1px solid #d6d6d6"></div>
<div class="a" style="left:58px;top:708px;width:55px;height:24px;background:#ececec;border:1px solid #d2d2d2;border-bottom:none;border-radius:2px 2px 0 0"></div>
<div class="a" style="left:112px;top:708px;width:63px;height:24px;background:#ececec;border:1px solid #d2d2d2;border-bottom:none;border-radius:2px 2px 0 0"></div>
<div class="a" style="left:9px;top:706px;width:50px;height:27px;background:#fafafa;border:1px solid #d2d2d2;border-bottom:none;border-radius:2px 2px 0 0"></div>
<div class="t" style="left:21px;top:714px;font-size:11px">Table</div>
<div class="t" style="left:70px;top:714px;font-size:11px">Graph</div>
<div class="t" style="left:124px;top:714px;font-size:11px">Options</div>
<div class="cb" style="left:20px;top:745px;width:14px;height:14px"></div>
<div class="t" style="left:39px;top:746px;font-size:11px">Decimals</div>
<div class="a" style="left:95px;top:743px;width:39px;height:18px;background:#fff;border:1px solid #a9a9a9;border-radius:2px"></div>
<div class="a" style="left:119px;top:744px;width:1px;height:16px;background:#d0d0d0"></div>
<div class="t" style="left:99px;top:746px;font-size:11px">2</div>
<svg class="i" style="left:121px;top:745px" width="10" height="14" viewBox="0 0 10 14"><path d="M1.5 5.5h7L5 1.5zM1.5 8.5h7L5 12.5z" fill="#555"/></svg>
<div class="a" style="left:20px;top:769px;width:351px;height:163px;background:#fff;border:1px solid #a9a9a9"></div>
<div class="a" style="left:21px;top:770px;width:335px;height:19px;background:linear-gradient(#f9f9f9,#ebebeb);border-bottom:1px solid #c9c9c9"></div>
<div class="a" style="left:180px;top:770px;width:1px;height:147px;background:#d8d8d8"></div>
<div class="a" style="left:332px;top:770px;width:1px;height:147px;background:#d8d8d8"></div>
<div class="t" style="left:97px;top:773px;font-size:11px">Layer</div>
<div class="t" style="left:243px;top:773px;font-size:11px">Value</div>
<div class="t" style="left:347px;top:773px;width:9px;overflow:hidden;font-size:11px">Re</div>
<div class="a" style="left:21px;top:789px;width:16px;height:128px;background:linear-gradient(90deg,#f6f6f6,#ececec);border-right:1px solid #c9c9c9"></div>
<div class="a" style="left:21px;top:818px;width:335px;height:1px;background:#d8d8d8"></div>
<div class="t" style="left:24px;top:800px;font-size:11px">1</div>
<div class="t" style="left:41px;top:798px;font-size:11px;letter-spacing:-0.55px">D34_MONTPELLIER_demo...</div>
<div class="t" style="left:184px;top:798px;font-size:11px">out of extent</div>
<div class="a" style="left:21px;top:848px;width:335px;height:1px;background:#d8d8d8"></div>
<div class="t" style="left:24px;top:830px;font-size:11px">2</div>
<div class="t" style="left:41px;top:828px;font-size:11px;letter-spacing:-0.55px">D34_PALAVAS_demo_Gps...</div>
<div class="t" style="left:184px;top:828px;font-size:11px">out of extent</div>
<div class="a" style="left:21px;top:878px;width:335px;height:1px;background:#d8d8d8"></div>
<div class="t" style="left:24px;top:860px;font-size:11px">3</div>
<div class="t" style="left:41px;top:858px;font-size:11px;letter-spacing:-0.55px">D38_GRENOBLE_demo_G...</div>
<div class="t" style="left:184px;top:858px;font-size:11px">out of extent</div>
<div class="a" style="left:21px;top:908px;width:335px;height:1px;background:#d8d8d8"></div>
<div class="t" style="left:24px;top:890px;font-size:11px">4</div>
<div class="t" style="left:41px;top:888px;font-size:11px;letter-spacing:-0.55px">D47_AGEN_demo_GpsTim...</div>
<div class="t" style="left:184px;top:888px;font-size:11px">out of extent</div>
<div class="a" style="left:356px;top:770px;width:14px;height:147px;background:#e6e6e6;border-left:1px solid #dcdcdc"></div>
<div class="a" style="left:357px;top:770px;width:13px;height:15px;background:#fcfcfc"></div>
<svg class="i" style="left:359px;top:773px" width="9" height="8" viewBox="0 0 9 8"><path d="M1 6h7L4.5 1.5z" fill="#555"/></svg>
<div class="a" style="left:357px;top:785px;width:13px;height:25px;background:#f8f8f8;border:1px solid #d3d3d3"></div>
<div class="a" style="left:357px;top:902px;width:13px;height:15px;background:#fcfcfc"></div>
<svg class="i" style="left:359px;top:906px" width="9" height="8" viewBox="0 0 9 8"><path d="M1 2h7L4.5 6.5z" fill="#555"/></svg>
<div class="a" style="left:21px;top:917px;width:349px;height:14px;background:#e6e6e6;border-top:1px solid #dcdcdc"></div>
<div class="a" style="left:21px;top:918px;width:16px;height:13px;background:#fcfcfc"></div>
<svg class="i" style="left:24px;top:920px" width="8" height="9" viewBox="0 0 8 9"><path d="M6 1v7L1.5 4.5z" fill="#555"/></svg>
<div class="a" style="left:37px;top:918px;width:229px;height:13px;background:#f8f8f8;border:1px solid #d3d3d3"></div>
<div class="a" style="left:342px;top:918px;width:14px;height:13px;background:#fcfcfc"></div>
<svg class="i" style="left:345px;top:920px" width="8" height="9" viewBox="0 0 8 9"><path d="M2 1v7L6.5 4.5z" fill="#555"/></svg>
<div class="a" style="left:356px;top:917px;width:14px;height:14px;background:#f0f0f0;border-left:1px solid #dcdcdc;border-top:1px solid #dcdcdc"></div>
<div class="t" style="left:9px;top:950px;font-size:11px">Coordinate:'912982.79,6459159.84,out of extent'</div>
<div class="a" style="left:5px;top:976px;width:233px;height:23px;background:#fff;border:1px solid #b5b5b5;border-radius:3px"></div>
<svg class="i" style="left:12px;top:982px" width="14" height="14" viewBox="0 0 14 14"><circle cx="5.5" cy="5.5" r="4.2" fill="none" stroke="#666" stroke-width="1.2"/><path d="M8.5 8.5l4 4" stroke="#666" stroke-width="1.3"/></svg>
<div class="t" style="left:33px;top:981px;font-size:11px;color:#7a7a7a">Taper pour trouver (Ctrl+K)</div>
<div class="a" style="left:397px;top:973px;width:1283px;height:29px;background:#f0f0f0"></div>
<div class="a" style="left:797px;top:979px;width:87px;height:18px;border-radius:3px;background:repeating-linear-gradient(120deg,#0a7ce6 0 10px,#2089ea 10px 20px);border:1px solid #0560b8"></div>
<div class="t" style="left:893px;top:981px;font-size:11px">Coordonnée</div>
<div class="a" style="left:957px;top:976px;width:97px;height:23px;background:#fff;border:1px solid #b9b9b9;border-radius:2px"></div>
<div class="t" style="left:964px;top:981px;font-size:11px">912983, 6459160</div>
<svg class="i" style="left:1059px;top:978px" width="16" height="18" viewBox="0 0 16 18"><path d="M5 2c3-1 6 1 7 4l2 6c1 3-1 5-4 5s-5-2-6-5L2 7c-1-3 0-4 3-5z" fill="#666" stroke="#222" stroke-width=".8"/><circle cx="9" cy="13" r="2.4" fill="#fff" stroke="#333" stroke-width=".7"/></svg>
<div class="t" style="left:1087px;top:981px;font-size:11px">Échelle</div>
<div class="a" style="left:1125px;top:977px;width:77px;height:22px;background:#fff;border:1px solid #b9b9b9;border-radius:2px"></div>
<div class="a" style="left:1181px;top:978px;width:1px;height:20px;background:#d6d6d6"></div>
<div class="t" style="left:1129px;top:981px;font-size:11px">1:6196</div>
<svg class="i" style="left:1186px;top:985px" width="12" height="8" viewBox="0 0 12 8"><path d="M2 2h8L6 6z" fill="#555"/></svg>
<svg class="i" style="left:1213px;top:979px" width="14" height="18" viewBox="0 0 14 18"><path d="M3.5 8V5.5a3.5 3.5 0 0 1 7 0V8" fill="none" stroke="#666" stroke-width="1.6"/><rect x="1.5" y="8" width="11" height="8.5" rx="1.2" fill="#666"/></svg>
<div class="t" style="left:1236px;top:981px;font-size:11px">Loupe</div>
<div class="a" style="left:1270px;top:978px;width:81px;height:21px;background:#fff;border:1px solid #b9b9b9;border-radius:2px"></div>
<div class="a" style="left:1337px;top:979px;width:1px;height:19px;background:#d6d6d6"></div>
<div class="t" style="left:1274px;top:981px;font-size:11px">100%</div>
<svg class="i" style="left:1339px;top:980px" width="10" height="16" viewBox="0 0 10 16"><path d="M1.5 6.5h7L5 2.5zM1.5 9.5h7L5 13.5z" fill="#555"/></svg>
<div class="t" style="left:1360px;top:981px;font-size:11px">Rotation</div>
<div class="a" style="left:1411px;top:979px;width:82px;height:20px;background:#fff;border:1px solid #b9b9b9;border-radius:2px"></div>
<div class="a" style="left:1478px;top:980px;width:1px;height:18px;background:#d6d6d6"></div>
<div class="t" style="left:1416px;top:981px;font-size:11px">0.0 °</div>
<svg class="i" style="left:1480px;top:980px" width="10" height="16" viewBox="0 0 10 16"><path d="M1.5 6.5h7L5 2.5zM1.5 9.5h7L5 13.5z" fill="#555"/></svg>
<div class="cb" style="left:1499px;top:980px;width:14px;height:14px"><svg class="i" style="left:1px;top:1px" width="11" height="11" viewBox="0 0 11 11"><path d="M1.8 5.6l2.6 3.2L9.5 1.5" fill="none" stroke="#000" stroke-width="1.5"/></svg></div>
<div class="t" style="left:1519px;top:981px;font-size:11px">Rendu</div>
<svg class="i" style="left:1564px;top:981px" width="14" height="14" viewBox="0 0 14 14"><circle cx="7" cy="7" r="6" fill="none" stroke="#555" stroke-width="1"/><ellipse cx="7" cy="7" rx="2.6" ry="6" fill="none" stroke="#555" stroke-width=".9"/><path d="M1 7h12M2 4h10M2 10h10" stroke="#555" stroke-width=".9"/></svg>
<div class="t" style="left:1582px;top:981px;font-size:11px;letter-spacing:-0.6px">EPSG:2154</div>
<svg class="i" style="left:1657px;top:981px" width="17" height="16" viewBox="0 0 17 16"><ellipse cx="8" cy="6.8" rx="7.3" ry="6" fill="#6b6b6b"/><path d="M9 11.5l6 4-3.5-5z" fill="#6b6b6b"/><circle cx="4.6" cy="6.8" r="1.1" fill="#fff"/><circle cx="8" cy="6.8" r="1.1" fill="#fff"/><circle cx="11.4" cy="6.8" r="1.1" fill="#fff"/></svg>
<div class="a" style="left:479px;top:59px;width:139px;height:21px;background:#ffffe1;border:1px solid #222;box-shadow:2px 2px 2px rgba(0,0,0,.25)"></div><div class="t" style="left:483px;top:63px;font-size:11px">Navigation cartographique</div>
</body></html>
